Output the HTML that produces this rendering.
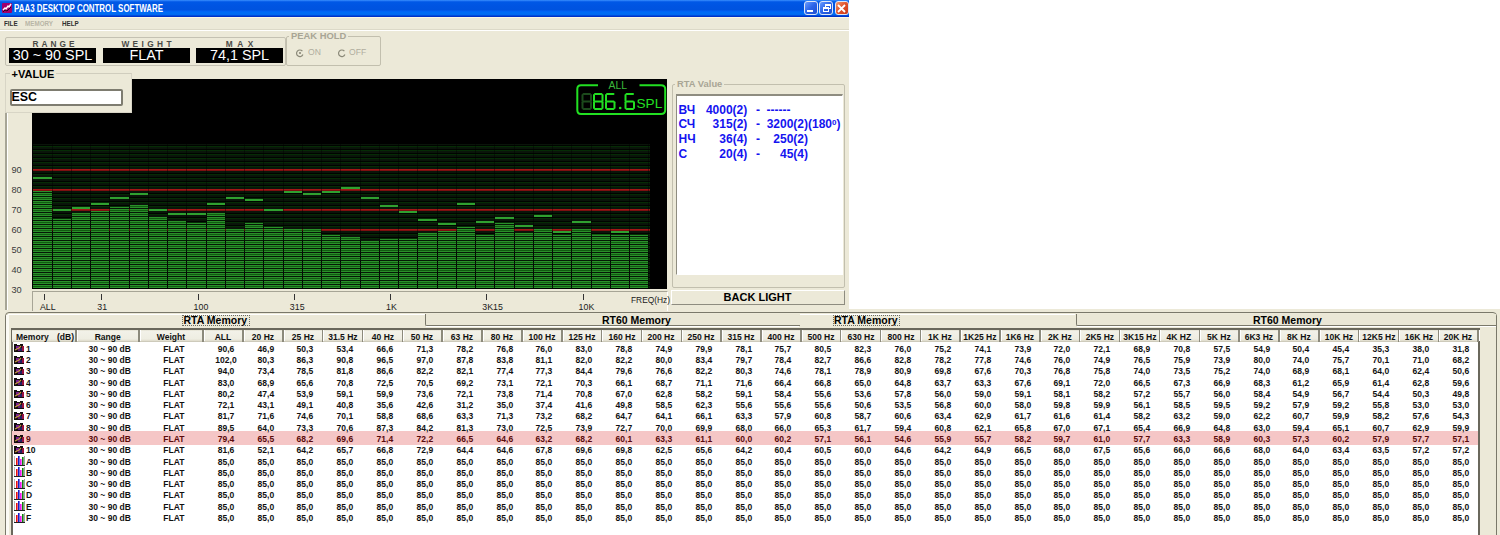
<!DOCTYPE html><html><head><meta charset="utf-8"><style>
*{margin:0;padding:0;box-sizing:border-box}
html,body{width:1500px;height:535px;overflow:hidden;background:#fff;font-family:"Liberation Sans",sans-serif}
.a{position:absolute}
.t{position:absolute;white-space:pre;line-height:1}
</style></head><body>
<div class="a" style="left:0;top:0;width:849px;height:313px;background:#ECE9D8"></div><div class="a" style="left:0;top:0;width:849px;height:17px;background:linear-gradient(to bottom,#3D95FF 0px,#1A6CF0 1px,#0058E6 2px,#0054E2 6px,#0053DF 10px,#0062F6 11px,#006EF4 13px,#0068F0 15px,#0032C8 16px,#0032C8 17px)"></div><div class="a" style="left:0;top:17px;width:849px;height:1px;background:#FBF8E4"></div><svg class="a" style="left:2px;top:3px" width="10" height="10" viewBox="0 0 10 10"><rect width="10" height="10" rx="1" fill="#A0006C"/><path d="M1 7 L3 5 L4 6 L6 3 L7 4 L9 1" stroke="#fff" stroke-width="1.4" fill="none"/><path d="M1 9 L3 7 L5 8 L9 4" stroke="#300020" stroke-width="1" fill="none"/></svg><div class="t" style="left:13.8px;top:4.2px;font-size:10.4px;font-weight:bold;color:#fff;transform-origin:0 0;transform:scaleX(0.762)">PAA3 DESKTOP CONTROL SOFTWARE</div><div class="a" style="left:803.5px;top:1px;width:14px;height:14px;border:1px solid #DDE6F8;border-radius:3px;background:linear-gradient(135deg,#6A9CFF,#2A63E8 50%,#1F4FD0)"></div><div class="a" style="left:807px;top:10px;width:6px;height:2px;background:#fff"></div><div class="a" style="left:819px;top:1px;width:14px;height:14px;border:1px solid #DDE6F8;border-radius:3px;background:linear-gradient(135deg,#6A9CFF,#2A63E8 50%,#1F4FD0)"></div><div class="a" style="left:823px;top:7px;width:6px;height:5px;border:1px solid #fff;border-top-width:2px"></div><div class="a" style="left:825px;top:4px;width:6px;height:5px;border:1px solid #fff;border-top-width:2px"></div><div class="a" style="left:834.5px;top:1px;width:14px;height:14px;border:1px solid #DDE6F8;border-radius:3px;background:linear-gradient(135deg,#F09A70,#E0502A 50%,#C83A18)"></div><svg class="a" style="left:837px;top:4px" width="9" height="9" viewBox="0 0 9 9"><path d="M1 1L8 8M8 1L1 8" stroke="#fff" stroke-width="1.8"/></svg><div class="t" style="left:4px;top:20px;font-size:7.4px;font-weight:bold;color:#303030;transform-origin:0 0;transform:scaleX(0.85)">FILE</div><div class="t" style="left:25px;top:20px;font-size:7.4px;font-weight:bold;color:#B8B5A6;transform-origin:0 0;transform:scaleX(0.85)">MEMORY</div><div class="t" style="left:62px;top:20px;font-size:7.4px;font-weight:bold;color:#303030;transform-origin:0 0;transform:scaleX(0.85)">HELP</div><div class="a" style="left:0;top:29px;width:849px;height:1px;background:#DCD9C8"></div><div class="a" style="left:0;top:30px;width:849px;height:1px;background:#FFFFFF"></div><div class="a" style="left:5px;top:37px;width:281px;height:29px;border:1px solid #C4C1B2;border-radius:2px"></div><div class="t" style="left:13.5px;width:80px;text-align:center;top:39.5px;font-size:8.3px;font-weight:bold;letter-spacing:3.0px;color:#4a4a46;text-indent:3.0px">RANGE</div><div class="a" style="left:9px;top:48px;width:87px;height:15px;background:#000"></div><div class="t" style="left:9px;width:87px;text-align:center;top:47.5px;font-size:14.4px;color:#fff">30 ~ 90 SPL</div><div class="t" style="left:106.5px;width:80px;text-align:center;top:39.5px;font-size:8.3px;font-weight:bold;letter-spacing:3.4px;color:#4a4a46;text-indent:3.4px">WEIGHT</div><div class="a" style="left:103px;top:48px;width:87px;height:15px;background:#000"></div><div class="t" style="left:103px;width:87px;text-align:center;top:47.5px;font-size:14.4px;color:#fff">FLAT</div><div class="t" style="left:199.6px;width:80px;text-align:center;top:39.5px;font-size:8.3px;font-weight:bold;letter-spacing:4.6px;color:#4a4a46;text-indent:4.6px">MAX</div><div class="a" style="left:196px;top:48px;width:87px;height:15px;background:#000"></div><div class="t" style="left:196px;width:87px;text-align:center;top:47.5px;font-size:14.4px;color:#fff">74,1 SPL</div><div class="a" style="left:285.5px;top:35.5px;width:95px;height:30px;border:1px solid #C2BFAE;border-radius:2px"></div><div class="t" style="left:289px;top:31px;padding:0 2px;background:#ECE9D8;font-size:9.4px;font-weight:bold;color:#A8A595">PEAK HOLD</div><svg class="a" style="left:295px;top:48px" width="10" height="10" viewBox="0 0 10 10"><path d="M7.4 3.2 A3.3 3.3 0 1 0 7.9 6.6" stroke="#8a8878" stroke-width="1.2" fill="none"/><circle cx="5" cy="5" r="1.1" fill="#8a8878"/></svg><div class="t" style="left:308px;top:48px;font-size:8.6px;color:#B0AD9E">ON</div><svg class="a" style="left:337px;top:48px" width="10" height="10" viewBox="0 0 10 10"><path d="M7.4 3.2 A3.3 3.3 0 1 0 7.9 6.6" stroke="#8a8878" stroke-width="1.2" fill="none"/></svg><div class="t" style="left:349px;top:48px;font-size:8.6px;color:#B0AD9E">OFF</div><div class="a" style="left:32px;top:79px;width:635px;height:210px;background:#000"></div><div class="a" style="left:5px;top:113px;width:2px;height:197px;background:#A7A596"></div><div class="a" style="left:7px;top:113px;width:1px;height:197px;background:#FFFFFF"></div><div class="t" style="left:11.5px;top:166px;font-size:9.2px;color:#3a3a3a">90</div><div class="t" style="left:11.5px;top:186px;font-size:9.2px;color:#3a3a3a">80</div><div class="t" style="left:11.5px;top:206px;font-size:9.2px;color:#3a3a3a">70</div><div class="t" style="left:11.5px;top:226px;font-size:9.2px;color:#3a3a3a">60</div><div class="t" style="left:11.5px;top:246px;font-size:9.2px;color:#3a3a3a">50</div><div class="t" style="left:11.5px;top:266px;font-size:9.2px;color:#3a3a3a">40</div><div class="t" style="left:11.5px;top:286px;font-size:9.2px;color:#3a3a3a">30</div><div class="a" style="left:33px;top:144px;width:617px;height:144px;background:linear-gradient(to bottom,#0a140a 0px,#0a140a 1px,#000400 1px,#000400 2px,#052C05 2px,#052C05 3px,#0a160a 3px,#0a160a 4px);background-size:100% 4px"></div><div class="a" style="left:33px;top:169px;width:617px;height:2px;background:linear-gradient(to bottom,#A41616 0,#A41616 1px,#7C1010 1px)"></div><div class="a" style="left:33px;top:189px;width:617px;height:2px;background:linear-gradient(to bottom,#A41616 0,#A41616 1px,#7C1010 1px)"></div><div class="a" style="left:33px;top:209px;width:617px;height:2px;background:linear-gradient(to bottom,#A41616 0,#A41616 1px,#7C1010 1px)"></div><div class="a" style="left:33px;top:229px;width:617px;height:2px;background:linear-gradient(to bottom,#A41616 0,#A41616 1px,#7C1010 1px)"></div><div class="a" style="left:33px;top:191px;width:19px;height:97px;background:linear-gradient(to bottom,#061806 0px,#061806 1px,#2A902A 1px,#2A902A 2px,#105C10 2px,#105C10 3px,#2A902A 3px,#2A902A 4px);background-size:100% 4px;background-position:0 -3px"></div><div class="a" style="left:52px;top:144px;width:1px;height:144px;background:rgba(0,0,0,0.4)"></div><div class="a" style="left:33px;top:177px;width:19px;height:2px;background:#30A030"></div><div class="a" style="left:53px;top:219px;width:18px;height:69px;background:linear-gradient(to bottom,#061806 0px,#061806 1px,#2A902A 1px,#2A902A 2px,#105C10 2px,#105C10 3px,#2A902A 3px,#2A902A 4px);background-size:100% 4px;background-position:0 -3px"></div><div class="a" style="left:71px;top:144px;width:1px;height:144px;background:rgba(0,0,0,0.4)"></div><div class="a" style="left:53px;top:209px;width:18px;height:2px;background:#30A030"></div><div class="a" style="left:72px;top:213px;width:18px;height:75px;background:linear-gradient(to bottom,#061806 0px,#061806 1px,#2A902A 1px,#2A902A 2px,#105C10 2px,#105C10 3px,#2A902A 3px,#2A902A 4px);background-size:100% 4px;background-position:0 -1px"></div><div class="a" style="left:90px;top:144px;width:1px;height:144px;background:rgba(0,0,0,0.4)"></div><div class="a" style="left:72px;top:207px;width:18px;height:2px;background:#30A030"></div><div class="a" style="left:91px;top:211px;width:18px;height:77px;background:linear-gradient(to bottom,#061806 0px,#061806 1px,#2A902A 1px,#2A902A 2px,#105C10 2px,#105C10 3px,#2A902A 3px,#2A902A 4px);background-size:100% 4px;background-position:0 -3px"></div><div class="a" style="left:109px;top:144px;width:1px;height:144px;background:rgba(0,0,0,0.4)"></div><div class="a" style="left:91px;top:203px;width:18px;height:2px;background:#30A030"></div><div class="a" style="left:110px;top:207px;width:19px;height:81px;background:linear-gradient(to bottom,#061806 0px,#061806 1px,#2A902A 1px,#2A902A 2px,#105C10 2px,#105C10 3px,#2A902A 3px,#2A902A 4px);background-size:100% 4px;background-position:0 -3px"></div><div class="a" style="left:129px;top:144px;width:1px;height:144px;background:rgba(0,0,0,0.4)"></div><div class="a" style="left:110px;top:197px;width:19px;height:2px;background:#30A030"></div><div class="a" style="left:130px;top:205px;width:18px;height:83px;background:linear-gradient(to bottom,#061806 0px,#061806 1px,#2A902A 1px,#2A902A 2px,#105C10 2px,#105C10 3px,#2A902A 3px,#2A902A 4px);background-size:100% 4px;background-position:0 -1px"></div><div class="a" style="left:148px;top:144px;width:1px;height:144px;background:rgba(0,0,0,0.4)"></div><div class="a" style="left:130px;top:193px;width:18px;height:2px;background:#30A030"></div><div class="a" style="left:149px;top:217px;width:18px;height:71px;background:linear-gradient(to bottom,#061806 0px,#061806 1px,#2A902A 1px,#2A902A 2px,#105C10 2px,#105C10 3px,#2A902A 3px,#2A902A 4px);background-size:100% 4px;background-position:0 -1px"></div><div class="a" style="left:167px;top:144px;width:1px;height:144px;background:rgba(0,0,0,0.4)"></div><div class="a" style="left:149px;top:209px;width:18px;height:2px;background:#30A030"></div><div class="a" style="left:168px;top:221px;width:18px;height:67px;background:linear-gradient(to bottom,#061806 0px,#061806 1px,#2A902A 1px,#2A902A 2px,#105C10 2px,#105C10 3px,#2A902A 3px,#2A902A 4px);background-size:100% 4px;background-position:0 -1px"></div><div class="a" style="left:186px;top:144px;width:1px;height:144px;background:rgba(0,0,0,0.4)"></div><div class="a" style="left:168px;top:213px;width:18px;height:2px;background:#30A030"></div><div class="a" style="left:187px;top:223px;width:19px;height:65px;background:linear-gradient(to bottom,#061806 0px,#061806 1px,#2A902A 1px,#2A902A 2px,#105C10 2px,#105C10 3px,#2A902A 3px,#2A902A 4px);background-size:100% 4px;background-position:0 -3px"></div><div class="a" style="left:206px;top:144px;width:1px;height:144px;background:rgba(0,0,0,0.4)"></div><div class="a" style="left:187px;top:213px;width:19px;height:2px;background:#30A030"></div><div class="a" style="left:207px;top:213px;width:18px;height:75px;background:linear-gradient(to bottom,#061806 0px,#061806 1px,#2A902A 1px,#2A902A 2px,#105C10 2px,#105C10 3px,#2A902A 3px,#2A902A 4px);background-size:100% 4px;background-position:0 -1px"></div><div class="a" style="left:225px;top:144px;width:1px;height:144px;background:rgba(0,0,0,0.4)"></div><div class="a" style="left:207px;top:203px;width:18px;height:2px;background:#30A030"></div><div class="a" style="left:226px;top:229px;width:18px;height:59px;background:linear-gradient(to bottom,#061806 0px,#061806 1px,#2A902A 1px,#2A902A 2px,#105C10 2px,#105C10 3px,#2A902A 3px,#2A902A 4px);background-size:100% 4px;background-position:0 -1px"></div><div class="a" style="left:244px;top:144px;width:1px;height:144px;background:rgba(0,0,0,0.4)"></div><div class="a" style="left:226px;top:197px;width:18px;height:2px;background:#30A030"></div><div class="a" style="left:245px;top:223px;width:18px;height:65px;background:linear-gradient(to bottom,#061806 0px,#061806 1px,#2A902A 1px,#2A902A 2px,#105C10 2px,#105C10 3px,#2A902A 3px,#2A902A 4px);background-size:100% 4px;background-position:0 -3px"></div><div class="a" style="left:263px;top:144px;width:1px;height:144px;background:rgba(0,0,0,0.4)"></div><div class="a" style="left:245px;top:199px;width:18px;height:2px;background:#30A030"></div><div class="a" style="left:264px;top:227px;width:19px;height:61px;background:linear-gradient(to bottom,#061806 0px,#061806 1px,#2A902A 1px,#2A902A 2px,#105C10 2px,#105C10 3px,#2A902A 3px,#2A902A 4px);background-size:100% 4px;background-position:0 -3px"></div><div class="a" style="left:283px;top:144px;width:1px;height:144px;background:rgba(0,0,0,0.4)"></div><div class="a" style="left:264px;top:209px;width:19px;height:2px;background:#30A030"></div><div class="a" style="left:284px;top:229px;width:18px;height:59px;background:linear-gradient(to bottom,#061806 0px,#061806 1px,#2A902A 1px,#2A902A 2px,#105C10 2px,#105C10 3px,#2A902A 3px,#2A902A 4px);background-size:100% 4px;background-position:0 -1px"></div><div class="a" style="left:302px;top:144px;width:1px;height:144px;background:rgba(0,0,0,0.4)"></div><div class="a" style="left:284px;top:191px;width:18px;height:2px;background:#30A030"></div><div class="a" style="left:303px;top:229px;width:18px;height:59px;background:linear-gradient(to bottom,#061806 0px,#061806 1px,#2A902A 1px,#2A902A 2px,#105C10 2px,#105C10 3px,#2A902A 3px,#2A902A 4px);background-size:100% 4px;background-position:0 -1px"></div><div class="a" style="left:321px;top:144px;width:1px;height:144px;background:rgba(0,0,0,0.4)"></div><div class="a" style="left:303px;top:193px;width:18px;height:2px;background:#30A030"></div><div class="a" style="left:322px;top:235px;width:18px;height:53px;background:linear-gradient(to bottom,#061806 0px,#061806 1px,#2A902A 1px,#2A902A 2px,#105C10 2px,#105C10 3px,#2A902A 3px,#2A902A 4px);background-size:100% 4px;background-position:0 -3px"></div><div class="a" style="left:340px;top:144px;width:1px;height:144px;background:rgba(0,0,0,0.4)"></div><div class="a" style="left:322px;top:191px;width:18px;height:2px;background:#30A030"></div><div class="a" style="left:341px;top:237px;width:19px;height:51px;background:linear-gradient(to bottom,#061806 0px,#061806 1px,#2A902A 1px,#2A902A 2px,#105C10 2px,#105C10 3px,#2A902A 3px,#2A902A 4px);background-size:100% 4px;background-position:0 -1px"></div><div class="a" style="left:360px;top:144px;width:1px;height:144px;background:rgba(0,0,0,0.4)"></div><div class="a" style="left:341px;top:187px;width:19px;height:2px;background:#30A030"></div><div class="a" style="left:361px;top:241px;width:18px;height:47px;background:linear-gradient(to bottom,#061806 0px,#061806 1px,#2A902A 1px,#2A902A 2px,#105C10 2px,#105C10 3px,#2A902A 3px,#2A902A 4px);background-size:100% 4px;background-position:0 -1px"></div><div class="a" style="left:379px;top:144px;width:1px;height:144px;background:rgba(0,0,0,0.4)"></div><div class="a" style="left:361px;top:197px;width:18px;height:2px;background:#30A030"></div><div class="a" style="left:380px;top:239px;width:18px;height:49px;background:linear-gradient(to bottom,#061806 0px,#061806 1px,#2A902A 1px,#2A902A 2px,#105C10 2px,#105C10 3px,#2A902A 3px,#2A902A 4px);background-size:100% 4px;background-position:0 -3px"></div><div class="a" style="left:398px;top:144px;width:1px;height:144px;background:rgba(0,0,0,0.4)"></div><div class="a" style="left:380px;top:205px;width:18px;height:2px;background:#30A030"></div><div class="a" style="left:399px;top:239px;width:18px;height:49px;background:linear-gradient(to bottom,#061806 0px,#061806 1px,#2A902A 1px,#2A902A 2px,#105C10 2px,#105C10 3px,#2A902A 3px,#2A902A 4px);background-size:100% 4px;background-position:0 -3px"></div><div class="a" style="left:417px;top:144px;width:1px;height:144px;background:rgba(0,0,0,0.4)"></div><div class="a" style="left:399px;top:211px;width:18px;height:2px;background:#30A030"></div><div class="a" style="left:418px;top:233px;width:19px;height:55px;background:linear-gradient(to bottom,#061806 0px,#061806 1px,#2A902A 1px,#2A902A 2px,#105C10 2px,#105C10 3px,#2A902A 3px,#2A902A 4px);background-size:100% 4px;background-position:0 -1px"></div><div class="a" style="left:437px;top:144px;width:1px;height:144px;background:rgba(0,0,0,0.4)"></div><div class="a" style="left:418px;top:219px;width:19px;height:2px;background:#30A030"></div><div class="a" style="left:438px;top:231px;width:18px;height:57px;background:linear-gradient(to bottom,#061806 0px,#061806 1px,#2A902A 1px,#2A902A 2px,#105C10 2px,#105C10 3px,#2A902A 3px,#2A902A 4px);background-size:100% 4px;background-position:0 -3px"></div><div class="a" style="left:456px;top:144px;width:1px;height:144px;background:rgba(0,0,0,0.4)"></div><div class="a" style="left:438px;top:223px;width:18px;height:2px;background:#30A030"></div><div class="a" style="left:457px;top:227px;width:18px;height:61px;background:linear-gradient(to bottom,#061806 0px,#061806 1px,#2A902A 1px,#2A902A 2px,#105C10 2px,#105C10 3px,#2A902A 3px,#2A902A 4px);background-size:100% 4px;background-position:0 -3px"></div><div class="a" style="left:475px;top:144px;width:1px;height:144px;background:rgba(0,0,0,0.4)"></div><div class="a" style="left:457px;top:203px;width:18px;height:2px;background:#30A030"></div><div class="a" style="left:476px;top:235px;width:18px;height:53px;background:linear-gradient(to bottom,#061806 0px,#061806 1px,#2A902A 1px,#2A902A 2px,#105C10 2px,#105C10 3px,#2A902A 3px,#2A902A 4px);background-size:100% 4px;background-position:0 -3px"></div><div class="a" style="left:494px;top:144px;width:1px;height:144px;background:rgba(0,0,0,0.4)"></div><div class="a" style="left:476px;top:221px;width:18px;height:2px;background:#30A030"></div><div class="a" style="left:495px;top:223px;width:19px;height:65px;background:linear-gradient(to bottom,#061806 0px,#061806 1px,#2A902A 1px,#2A902A 2px,#105C10 2px,#105C10 3px,#2A902A 3px,#2A902A 4px);background-size:100% 4px;background-position:0 -3px"></div><div class="a" style="left:514px;top:144px;width:1px;height:144px;background:rgba(0,0,0,0.4)"></div><div class="a" style="left:495px;top:217px;width:19px;height:2px;background:#30A030"></div><div class="a" style="left:515px;top:232px;width:18px;height:56px;background:linear-gradient(to bottom,#061806 0px,#061806 1px,#2A902A 1px,#2A902A 2px,#105C10 2px,#105C10 3px,#2A902A 3px,#2A902A 4px);background-size:100% 4px;background-position:0 0px"></div><div class="a" style="left:533px;top:144px;width:1px;height:144px;background:rgba(0,0,0,0.4)"></div><div class="a" style="left:515px;top:225px;width:18px;height:2px;background:#30A030"></div><div class="a" style="left:534px;top:229px;width:18px;height:59px;background:linear-gradient(to bottom,#061806 0px,#061806 1px,#2A902A 1px,#2A902A 2px,#105C10 2px,#105C10 3px,#2A902A 3px,#2A902A 4px);background-size:100% 4px;background-position:0 -1px"></div><div class="a" style="left:552px;top:144px;width:1px;height:144px;background:rgba(0,0,0,0.4)"></div><div class="a" style="left:534px;top:215px;width:18px;height:2px;background:#30A030"></div><div class="a" style="left:553px;top:235px;width:18px;height:53px;background:linear-gradient(to bottom,#061806 0px,#061806 1px,#2A902A 1px,#2A902A 2px,#105C10 2px,#105C10 3px,#2A902A 3px,#2A902A 4px);background-size:100% 4px;background-position:0 -3px"></div><div class="a" style="left:571px;top:144px;width:1px;height:144px;background:rgba(0,0,0,0.4)"></div><div class="a" style="left:553px;top:231px;width:18px;height:2px;background:#30A030"></div><div class="a" style="left:572px;top:229px;width:19px;height:59px;background:linear-gradient(to bottom,#061806 0px,#061806 1px,#2A902A 1px,#2A902A 2px,#105C10 2px,#105C10 3px,#2A902A 3px,#2A902A 4px);background-size:100% 4px;background-position:0 -1px"></div><div class="a" style="left:591px;top:144px;width:1px;height:144px;background:rgba(0,0,0,0.4)"></div><div class="a" style="left:572px;top:221px;width:19px;height:2px;background:#30A030"></div><div class="a" style="left:592px;top:234px;width:18px;height:54px;background:linear-gradient(to bottom,#061806 0px,#061806 1px,#2A902A 1px,#2A902A 2px,#105C10 2px,#105C10 3px,#2A902A 3px,#2A902A 4px);background-size:100% 4px;background-position:0 -2px"></div><div class="a" style="left:610px;top:144px;width:1px;height:144px;background:rgba(0,0,0,0.4)"></div><div class="a" style="left:611px;top:235px;width:18px;height:53px;background:linear-gradient(to bottom,#061806 0px,#061806 1px,#2A902A 1px,#2A902A 2px,#105C10 2px,#105C10 3px,#2A902A 3px,#2A902A 4px);background-size:100% 4px;background-position:0 -3px"></div><div class="a" style="left:629px;top:144px;width:1px;height:144px;background:rgba(0,0,0,0.4)"></div><div class="a" style="left:611px;top:231px;width:18px;height:2px;background:#30A030"></div><div class="a" style="left:630px;top:235px;width:18px;height:53px;background:linear-gradient(to bottom,#061806 0px,#061806 1px,#2A902A 1px,#2A902A 2px,#105C10 2px,#105C10 3px,#2A902A 3px,#2A902A 4px);background-size:100% 4px;background-position:0 -3px"></div><div class="a" style="left:648px;top:144px;width:1px;height:144px;background:rgba(0,0,0,0.4)"></div><div class="a" style="left:32px;top:288px;width:618px;height:1px;background:#000"></div><svg class="a" style="left:575px;top:80px" width="94" height="37" viewBox="575 80 94 37"><path d="M598 85.2 H581 Q577.3 85.2 577.3 89 V110 Q577.3 114 581 114 H661 Q665.2 114 665.2 110 V89 Q665.2 85.2 661 85.2 H639.5" stroke="#22E022" stroke-width="2" fill="none"/></svg><div class="t" style="left:608.5px;top:81.2px;font-size:10.4px;color:#3CB83C">ALL</div><svg class="a" style="left:0;top:0" width="700" height="130"><path d="M583.5 94.0 H590.0" stroke="#1C4A1C" stroke-width="2.0" stroke-linecap="round" fill="none"/><path d="M591.0 95.0 V100.7" stroke="#1C4A1C" stroke-width="2.0" stroke-linecap="round" fill="none"/><path d="M591.0 102.3 V108.0" stroke="#1C4A1C" stroke-width="2.0" stroke-linecap="round" fill="none"/><path d="M583.5 109.0 H590.0" stroke="#1C4A1C" stroke-width="2.0" stroke-linecap="round" fill="none"/><path d="M582.5 102.3 V108.0" stroke="#1C4A1C" stroke-width="2.0" stroke-linecap="round" fill="none"/><path d="M582.5 95.0 V100.7" stroke="#1C4A1C" stroke-width="2.0" stroke-linecap="round" fill="none"/><path d="M583.5 101.5 H590.0" stroke="#1C4A1C" stroke-width="2.0" stroke-linecap="round" fill="none"/><path d="M595.0 94.0 H601.5" stroke="#22E022" stroke-width="2.0" stroke-linecap="round" fill="none"/><path d="M602.5 95.0 V100.7" stroke="#22E022" stroke-width="2.0" stroke-linecap="round" fill="none"/><path d="M602.5 102.3 V108.0" stroke="#22E022" stroke-width="2.0" stroke-linecap="round" fill="none"/><path d="M595.0 109.0 H601.5" stroke="#22E022" stroke-width="2.0" stroke-linecap="round" fill="none"/><path d="M594.0 102.3 V108.0" stroke="#22E022" stroke-width="2.0" stroke-linecap="round" fill="none"/><path d="M594.0 95.0 V100.7" stroke="#22E022" stroke-width="2.0" stroke-linecap="round" fill="none"/><path d="M595.0 101.5 H601.5" stroke="#22E022" stroke-width="2.0" stroke-linecap="round" fill="none"/><path d="M607.0 94.0 H613.5" stroke="#22E022" stroke-width="2.0" stroke-linecap="round" fill="none"/><path d="M614.5 102.3 V108.0" stroke="#22E022" stroke-width="2.0" stroke-linecap="round" fill="none"/><path d="M607.0 109.0 H613.5" stroke="#22E022" stroke-width="2.0" stroke-linecap="round" fill="none"/><path d="M606.0 102.3 V108.0" stroke="#22E022" stroke-width="2.0" stroke-linecap="round" fill="none"/><path d="M606.0 95.0 V100.7" stroke="#22E022" stroke-width="2.0" stroke-linecap="round" fill="none"/><path d="M607.0 101.5 H613.5" stroke="#22E022" stroke-width="2.0" stroke-linecap="round" fill="none"/><circle cx="620.2" cy="108" r="1.3" fill="#22E022"/><path d="M626.5 94.0 H633.0" stroke="#22E022" stroke-width="2.0" stroke-linecap="round" fill="none"/><path d="M634.0 102.3 V108.0" stroke="#22E022" stroke-width="2.0" stroke-linecap="round" fill="none"/><path d="M626.5 109.0 H633.0" stroke="#22E022" stroke-width="2.0" stroke-linecap="round" fill="none"/><path d="M625.5 102.3 V108.0" stroke="#22E022" stroke-width="2.0" stroke-linecap="round" fill="none"/><path d="M625.5 95.0 V100.7" stroke="#22E022" stroke-width="2.0" stroke-linecap="round" fill="none"/><path d="M626.5 101.5 H633.0" stroke="#22E022" stroke-width="2.0" stroke-linecap="round" fill="none"/></svg><div class="t" style="left:636.5px;top:96.5px;font-size:13.6px;color:#22E022">SPL</div><div class="a" style="left:5px;top:73px;width:127px;height:40px;background:#ECE9D8;border:1px solid #D8D5C6;border-top-color:#D0CDBE"></div><div class="t" style="left:9.5px;top:68.5px;padding:0 2px;background:#ECE9D8;font-size:11px;font-weight:bold;color:#000">+VALUE</div><div class="a" style="left:10px;top:88.5px;width:113px;height:17.5px;background:#fff;border:2px solid #7E7C70;border-radius:2px"></div><div class="t" style="left:11.5px;top:91px;font-size:12.4px;font-weight:bold;color:#000">ESC</div><div class="a" style="left:32px;top:291px;width:636px;height:20px;border-left:1px solid #A7A596;border-top:1px solid #A7A596;border-right:1px solid #fff"></div><div class="a" style="left:44px;top:294px;width:1px;height:6px;background:#333"></div><div class="t" style="left:40px;top:303px;font-size:8.8px;color:#1a1a1a">ALL</div><div class="a" style="left:101px;top:294px;width:1px;height:6px;background:#333"></div><div class="t" style="left:97.35px;top:303px;font-size:8.8px;color:#1a1a1a">31</div><div class="a" style="left:198px;top:294px;width:1px;height:6px;background:#333"></div><div class="t" style="left:193.60000000000002px;top:303px;font-size:8.8px;color:#1a1a1a">100</div><div class="a" style="left:294px;top:294px;width:1px;height:6px;background:#333"></div><div class="t" style="left:289.85px;top:303px;font-size:8.8px;color:#1a1a1a">315</div><div class="a" style="left:390px;top:294px;width:1px;height:6px;background:#333"></div><div class="t" style="left:386.1px;top:303px;font-size:8.8px;color:#1a1a1a">1K</div><div class="a" style="left:486px;top:294px;width:1px;height:6px;background:#333"></div><div class="t" style="left:482.35px;top:303px;font-size:8.8px;color:#1a1a1a">3K15</div><div class="a" style="left:583px;top:294px;width:1px;height:6px;background:#333"></div><div class="t" style="left:578.5999999999999px;top:303px;font-size:8.8px;color:#1a1a1a">10K</div><div class="t" style="left:630.5px;top:295.5px;font-size:8.8px;color:#1a1a1a;transform-origin:0 0;transform:scaleX(0.95)">FREQ(Hz)</div><div class="a" style="left:671.5px;top:83.5px;width:173px;height:204px;border:1px solid #C2BFAE;border-radius:2px"></div><div class="t" style="left:675px;top:78.7px;padding:0 2px;background:#ECE9D8;font-size:9.4px;font-weight:bold;color:#A8A595">RTA Value</div><div class="a" style="left:676px;top:94px;width:167px;height:181px;background:#fff;border-top:2px solid #8E8C80;border-left:1px solid #8E8C80;border-right:1px solid #fff;border-bottom:1px solid #fff"></div><div class="t" style="left:678.5px;top:103.5px;font-size:12px;font-weight:bold;color:#1414F0">ВЧ</div><div class="t" style="left:647.3px;width:100px;text-align:right;top:103.5px;font-size:12px;font-weight:bold;color:#1414F0">4000(2)</div><div class="t" style="left:756px;top:103.5px;font-size:12px;font-weight:bold;color:#1414F0">-</div><div class="t" style="left:766.5px;top:103.5px;font-size:12px;font-weight:bold;color:#1414F0">------</div><div class="t" style="left:678.5px;top:118.3px;font-size:12px;font-weight:bold;color:#1414F0">СЧ</div><div class="t" style="left:647.3px;width:100px;text-align:right;top:118.3px;font-size:12px;font-weight:bold;color:#1414F0">315(2)</div><div class="t" style="left:756px;top:118.3px;font-size:12px;font-weight:bold;color:#1414F0">-</div><div class="t" style="left:708px;width:100px;text-align:right;top:118.3px;font-size:12px;font-weight:bold;color:#1414F0">3200(2)</div><div class="t" style="left:808px;top:118.3px;font-size:12px;font-weight:bold;color:#1414F0">(180<span style="font-size:8px;vertical-align:3px">0</span>)</div><div class="t" style="left:678.5px;top:133.2px;font-size:12px;font-weight:bold;color:#1414F0">НЧ</div><div class="t" style="left:647.3px;width:100px;text-align:right;top:133.2px;font-size:12px;font-weight:bold;color:#1414F0">36(4)</div><div class="t" style="left:756px;top:133.2px;font-size:12px;font-weight:bold;color:#1414F0">-</div><div class="t" style="left:708px;width:100px;text-align:right;top:133.2px;font-size:12px;font-weight:bold;color:#1414F0">250(2)</div><div class="t" style="left:678.5px;top:148px;font-size:12px;font-weight:bold;color:#1414F0">С</div><div class="t" style="left:647.3px;width:100px;text-align:right;top:148px;font-size:12px;font-weight:bold;color:#1414F0">20(4)</div><div class="t" style="left:756px;top:148px;font-size:12px;font-weight:bold;color:#1414F0">-</div><div class="t" style="left:708px;width:100px;text-align:right;top:148px;font-size:12px;font-weight:bold;color:#1414F0">45(4)</div><div class="a" style="left:671px;top:289.8px;width:174px;height:15.5px;background:#ECE9D8;border:1px solid #fff;border-right:1.5px solid #8E8C80;border-bottom:1.5px solid #8E8C80"></div><div class="t" style="left:671px;width:173px;text-align:center;top:291.8px;font-size:11px;font-weight:bold;color:#000">BACK LIGHT</div><div class="a" style="left:849px;top:309px;width:651px;height:226px;background:#ECE9D8"></div><div class="a" style="left:0;top:311px;width:849px;height:224px;background:#ECE9D8"></div><div class="a" style="left:5px;top:312.3px;width:1492px;height:260px;border:1px solid #7A786A;border-radius:4px"></div><div class="a" style="left:6.2px;top:315px;width:2.6px;height:230px;background:#FBFAF4"></div><div class="a" style="left:8px;top:313.5px;width:417px;height:1px;background:#fff"></div><div class="a" style="left:800px;top:313.5px;width:275px;height:1px;background:#fff"></div><div class="a" style="left:424.5px;top:313.5px;width:375px;height:12.5px;border-left:1px solid #7A786A;border-bottom:1px solid #7A786A;border-bottom-left-radius:2px;background:#EAE7D6"></div><div class="a" style="left:426px;top:326px;width:373px;height:1px;background:#fff"></div><div class="a" style="left:1075.5px;top:313.5px;width:420px;height:12.5px;border-left:1px solid #7A786A;border-bottom:1px solid #7A786A;border-bottom-left-radius:2px;background:#EAE7D6"></div><div class="a" style="left:1077px;top:326px;width:419px;height:1px;background:#fff"></div><div class="t" style="left:183.5px;top:314.5px;font-size:10.5px;font-weight:bold;color:#000">RTA Memory</div><div class="a" style="left:182px;top:314.5px;width:67.5px;height:11.5px;border:1px dotted #6a6a60"></div><div class="t" style="left:602px;top:314.5px;font-size:10.5px;font-weight:bold;color:#000">RT60 Memory</div><div class="t" style="left:834px;top:314.5px;font-size:10.5px;font-weight:bold;color:#000">RTA Memory</div><div class="a" style="left:832.5px;top:314.5px;width:67.5px;height:11.5px;border:1px dotted #6a6a60"></div><div class="t" style="left:1253px;top:314.5px;font-size:10.5px;font-weight:bold;color:#000">RT60 Memory</div><div class="a" style="left:10.5px;top:328px;width:1469.0px;height:220px;background:#fff;border:2px solid #6A685C;border-bottom:none"></div><div class="a" style="left:12px;top:329.5px;width:1466.0px;height:12.5px;background:linear-gradient(to bottom,#E4E1D2 0px,#F2F1E8 1.5px,#EEEDE2 9px,#E2DFD0 10.5px,#B9B6A6 12.5px)"></div><div class="a" style="left:75.05px;top:329.5px;width:1.5px;height:12.5px;background:#8C8A7C"></div><div class="a" style="left:76.55px;top:330.0px;width:1px;height:11.0px;background:#fff"></div><div class="t" style="left:16px;top:332.1px;font-size:9.8px;font-weight:bold;color:#111;transform:scaleX(0.87);transform-origin:0 0">Memory</div><div class="t" style="left:56.5px;top:332.1px;font-size:9.8px;font-weight:bold;color:#111;transform:scaleX(0.87);transform-origin:0 0">(dB)</div><div class="a" style="left:138.45px;top:329.5px;width:1.5px;height:12.5px;background:#8C8A7C"></div><div class="a" style="left:139.95px;top:330.0px;width:1px;height:11.0px;background:#fff"></div><div class="t" style="left:75.8px;width:63.39999999999999px;text-align:center;top:332.1px;font-size:9.8px;font-weight:bold;color:#111;transform:scaleX(0.87)">Range</div><div class="a" style="left:202.25px;top:329.5px;width:1.5px;height:12.5px;background:#8C8A7C"></div><div class="a" style="left:203.75px;top:330.0px;width:1px;height:11.0px;background:#fff"></div><div class="t" style="left:139.2px;width:63.80000000000001px;text-align:center;top:332.1px;font-size:9.8px;font-weight:bold;color:#111;transform:scaleX(0.87)">Weight</div><div class="a" style="left:242.25px;top:329.5px;width:1.5px;height:12.5px;background:#8C8A7C"></div><div class="a" style="left:243.75px;top:330.0px;width:1px;height:11.0px;background:#fff"></div><div class="t" style="left:203px;width:40.0px;text-align:center;top:332.1px;font-size:9.8px;font-weight:bold;color:#111;transform:scaleX(0.87)">ALL</div><div class="a" style="left:282.095px;top:329.5px;width:1.5px;height:12.5px;background:#8C8A7C"></div><div class="a" style="left:283.595px;top:330.0px;width:1px;height:11.0px;background:#fff"></div><div class="t" style="left:243.0px;width:39.84500000000003px;text-align:center;top:332.1px;font-size:9.8px;font-weight:bold;color:#111;transform:scaleX(0.87)">20 Hz</div><div class="a" style="left:321.94px;top:329.5px;width:1.5px;height:12.5px;background:#8C8A7C"></div><div class="a" style="left:323.44px;top:330.0px;width:1px;height:11.0px;background:#fff"></div><div class="t" style="left:282.845px;width:39.84499999999997px;text-align:center;top:332.1px;font-size:9.8px;font-weight:bold;color:#111;transform:scaleX(0.87)">25 Hz</div><div class="a" style="left:361.78499999999997px;top:329.5px;width:1.5px;height:12.5px;background:#8C8A7C"></div><div class="a" style="left:363.28499999999997px;top:330.0px;width:1px;height:11.0px;background:#fff"></div><div class="t" style="left:322.69px;width:39.84499999999997px;text-align:center;top:332.1px;font-size:9.8px;font-weight:bold;color:#111;transform:scaleX(0.87)">31.5 Hz</div><div class="a" style="left:401.63px;top:329.5px;width:1.5px;height:12.5px;background:#8C8A7C"></div><div class="a" style="left:403.13px;top:330.0px;width:1px;height:11.0px;background:#fff"></div><div class="t" style="left:362.53499999999997px;width:39.84500000000003px;text-align:center;top:332.1px;font-size:9.8px;font-weight:bold;color:#111;transform:scaleX(0.87)">40 Hz</div><div class="a" style="left:441.475px;top:329.5px;width:1.5px;height:12.5px;background:#8C8A7C"></div><div class="a" style="left:442.975px;top:330.0px;width:1px;height:11.0px;background:#fff"></div><div class="t" style="left:402.38px;width:39.84500000000003px;text-align:center;top:332.1px;font-size:9.8px;font-weight:bold;color:#111;transform:scaleX(0.87)">50 Hz</div><div class="a" style="left:481.32px;top:329.5px;width:1.5px;height:12.5px;background:#8C8A7C"></div><div class="a" style="left:482.82px;top:330.0px;width:1px;height:11.0px;background:#fff"></div><div class="t" style="left:442.225px;width:39.84499999999997px;text-align:center;top:332.1px;font-size:9.8px;font-weight:bold;color:#111;transform:scaleX(0.87)">63 Hz</div><div class="a" style="left:521.165px;top:329.5px;width:1.5px;height:12.5px;background:#8C8A7C"></div><div class="a" style="left:522.665px;top:330.0px;width:1px;height:11.0px;background:#fff"></div><div class="t" style="left:482.07px;width:39.84499999999997px;text-align:center;top:332.1px;font-size:9.8px;font-weight:bold;color:#111;transform:scaleX(0.87)">80 Hz</div><div class="a" style="left:561.01px;top:329.5px;width:1.5px;height:12.5px;background:#8C8A7C"></div><div class="a" style="left:562.51px;top:330.0px;width:1px;height:11.0px;background:#fff"></div><div class="t" style="left:521.915px;width:39.84500000000003px;text-align:center;top:332.1px;font-size:9.8px;font-weight:bold;color:#111;transform:scaleX(0.87)">100 Hz</div><div class="a" style="left:600.855px;top:329.5px;width:1.5px;height:12.5px;background:#8C8A7C"></div><div class="a" style="left:602.355px;top:330.0px;width:1px;height:11.0px;background:#fff"></div><div class="t" style="left:561.76px;width:39.84500000000003px;text-align:center;top:332.1px;font-size:9.8px;font-weight:bold;color:#111;transform:scaleX(0.87)">125 Hz</div><div class="a" style="left:640.7px;top:329.5px;width:1.5px;height:12.5px;background:#8C8A7C"></div><div class="a" style="left:642.2px;top:330.0px;width:1px;height:11.0px;background:#fff"></div><div class="t" style="left:601.605px;width:39.84500000000003px;text-align:center;top:332.1px;font-size:9.8px;font-weight:bold;color:#111;transform:scaleX(0.87)">160 Hz</div><div class="a" style="left:680.545px;top:329.5px;width:1.5px;height:12.5px;background:#8C8A7C"></div><div class="a" style="left:682.045px;top:330.0px;width:1px;height:11.0px;background:#fff"></div><div class="t" style="left:641.45px;width:39.844999999999914px;text-align:center;top:332.1px;font-size:9.8px;font-weight:bold;color:#111;transform:scaleX(0.87)">200 Hz</div><div class="a" style="left:720.39px;top:329.5px;width:1.5px;height:12.5px;background:#8C8A7C"></div><div class="a" style="left:721.89px;top:330.0px;width:1px;height:11.0px;background:#fff"></div><div class="t" style="left:681.295px;width:39.84500000000003px;text-align:center;top:332.1px;font-size:9.8px;font-weight:bold;color:#111;transform:scaleX(0.87)">250 Hz</div><div class="a" style="left:760.235px;top:329.5px;width:1.5px;height:12.5px;background:#8C8A7C"></div><div class="a" style="left:761.735px;top:330.0px;width:1px;height:11.0px;background:#fff"></div><div class="t" style="left:721.14px;width:39.84500000000003px;text-align:center;top:332.1px;font-size:9.8px;font-weight:bold;color:#111;transform:scaleX(0.87)">315 Hz</div><div class="a" style="left:800.0799999999999px;top:329.5px;width:1.5px;height:12.5px;background:#8C8A7C"></div><div class="a" style="left:801.5799999999999px;top:330.0px;width:1px;height:11.0px;background:#fff"></div><div class="t" style="left:760.985px;width:39.844999999999914px;text-align:center;top:332.1px;font-size:9.8px;font-weight:bold;color:#111;transform:scaleX(0.87)">400 Hz</div><div class="a" style="left:839.925px;top:329.5px;width:1.5px;height:12.5px;background:#8C8A7C"></div><div class="a" style="left:841.425px;top:330.0px;width:1px;height:11.0px;background:#fff"></div><div class="t" style="left:800.8299999999999px;width:39.84500000000003px;text-align:center;top:332.1px;font-size:9.8px;font-weight:bold;color:#111;transform:scaleX(0.87)">500 Hz</div><div class="a" style="left:879.77px;top:329.5px;width:1.5px;height:12.5px;background:#8C8A7C"></div><div class="a" style="left:881.27px;top:330.0px;width:1px;height:11.0px;background:#fff"></div><div class="t" style="left:840.675px;width:39.84500000000003px;text-align:center;top:332.1px;font-size:9.8px;font-weight:bold;color:#111;transform:scaleX(0.87)">630 Hz</div><div class="a" style="left:919.615px;top:329.5px;width:1.5px;height:12.5px;background:#8C8A7C"></div><div class="a" style="left:921.115px;top:330.0px;width:1px;height:11.0px;background:#fff"></div><div class="t" style="left:880.52px;width:39.84500000000003px;text-align:center;top:332.1px;font-size:9.8px;font-weight:bold;color:#111;transform:scaleX(0.87)">800 Hz</div><div class="a" style="left:959.46px;top:329.5px;width:1.5px;height:12.5px;background:#8C8A7C"></div><div class="a" style="left:960.96px;top:330.0px;width:1px;height:11.0px;background:#fff"></div><div class="t" style="left:920.365px;width:39.84500000000003px;text-align:center;top:332.1px;font-size:9.8px;font-weight:bold;color:#111;transform:scaleX(0.87)">1K Hz</div><div class="a" style="left:999.305px;top:329.5px;width:1.5px;height:12.5px;background:#8C8A7C"></div><div class="a" style="left:1000.805px;top:330.0px;width:1px;height:11.0px;background:#fff"></div><div class="t" style="left:960.21px;width:39.844999999999914px;text-align:center;top:332.1px;font-size:9.8px;font-weight:bold;color:#111;transform:scaleX(0.87)">1K25 Hz</div><div class="a" style="left:1039.15px;top:329.5px;width:1.5px;height:12.5px;background:#8C8A7C"></div><div class="a" style="left:1040.65px;top:330.0px;width:1px;height:11.0px;background:#fff"></div><div class="t" style="left:1000.055px;width:39.84500000000014px;text-align:center;top:332.1px;font-size:9.8px;font-weight:bold;color:#111;transform:scaleX(0.87)">1K6 Hz</div><div class="a" style="left:1078.995px;top:329.5px;width:1.5px;height:12.5px;background:#8C8A7C"></div><div class="a" style="left:1080.495px;top:330.0px;width:1px;height:11.0px;background:#fff"></div><div class="t" style="left:1039.9px;width:39.8449999999998px;text-align:center;top:332.1px;font-size:9.8px;font-weight:bold;color:#111;transform:scaleX(0.87)">2K Hz</div><div class="a" style="left:1118.84px;top:329.5px;width:1.5px;height:12.5px;background:#8C8A7C"></div><div class="a" style="left:1120.34px;top:330.0px;width:1px;height:11.0px;background:#fff"></div><div class="t" style="left:1079.745px;width:39.84500000000003px;text-align:center;top:332.1px;font-size:9.8px;font-weight:bold;color:#111;transform:scaleX(0.87)">2K5 Hz</div><div class="a" style="left:1158.685px;top:329.5px;width:1.5px;height:12.5px;background:#8C8A7C"></div><div class="a" style="left:1160.185px;top:330.0px;width:1px;height:11.0px;background:#fff"></div><div class="t" style="left:1119.59px;width:39.84500000000003px;text-align:center;top:332.1px;font-size:9.8px;font-weight:bold;color:#111;transform:scaleX(0.87)">3K15 Hz</div><div class="a" style="left:1198.53px;top:329.5px;width:1.5px;height:12.5px;background:#8C8A7C"></div><div class="a" style="left:1200.03px;top:330.0px;width:1px;height:11.0px;background:#fff"></div><div class="t" style="left:1159.435px;width:39.84500000000003px;text-align:center;top:332.1px;font-size:9.8px;font-weight:bold;color:#111;transform:scaleX(0.87)">4K HZ</div><div class="a" style="left:1238.375px;top:329.5px;width:1.5px;height:12.5px;background:#8C8A7C"></div><div class="a" style="left:1239.875px;top:330.0px;width:1px;height:11.0px;background:#fff"></div><div class="t" style="left:1199.28px;width:39.84500000000003px;text-align:center;top:332.1px;font-size:9.8px;font-weight:bold;color:#111;transform:scaleX(0.87)">5K Hz</div><div class="a" style="left:1278.22px;top:329.5px;width:1.5px;height:12.5px;background:#8C8A7C"></div><div class="a" style="left:1279.72px;top:330.0px;width:1px;height:11.0px;background:#fff"></div><div class="t" style="left:1239.125px;width:39.84500000000003px;text-align:center;top:332.1px;font-size:9.8px;font-weight:bold;color:#111;transform:scaleX(0.87)">6K3 Hz</div><div class="a" style="left:1318.065px;top:329.5px;width:1.5px;height:12.5px;background:#8C8A7C"></div><div class="a" style="left:1319.565px;top:330.0px;width:1px;height:11.0px;background:#fff"></div><div class="t" style="left:1278.97px;width:39.84500000000003px;text-align:center;top:332.1px;font-size:9.8px;font-weight:bold;color:#111;transform:scaleX(0.87)">8K Hz</div><div class="a" style="left:1357.9099999999999px;top:329.5px;width:1.5px;height:12.5px;background:#8C8A7C"></div><div class="a" style="left:1359.4099999999999px;top:330.0px;width:1px;height:11.0px;background:#fff"></div><div class="t" style="left:1318.815px;width:39.8449999999998px;text-align:center;top:332.1px;font-size:9.8px;font-weight:bold;color:#111;transform:scaleX(0.87)">10K Hz</div><div class="a" style="left:1397.7549999999999px;top:329.5px;width:1.5px;height:12.5px;background:#8C8A7C"></div><div class="a" style="left:1399.2549999999999px;top:330.0px;width:1px;height:11.0px;background:#fff"></div><div class="t" style="left:1358.6599999999999px;width:39.84500000000003px;text-align:center;top:332.1px;font-size:9.8px;font-weight:bold;color:#111;transform:scaleX(0.87)">12K5 Hz</div><div class="a" style="left:1437.6px;top:329.5px;width:1.5px;height:12.5px;background:#8C8A7C"></div><div class="a" style="left:1439.1px;top:330.0px;width:1px;height:11.0px;background:#fff"></div><div class="t" style="left:1398.5049999999999px;width:39.84500000000003px;text-align:center;top:332.1px;font-size:9.8px;font-weight:bold;color:#111;transform:scaleX(0.87)">16K Hz</div><div class="a" style="left:1477.445px;top:329.5px;width:1.5px;height:12.5px;background:#8C8A7C"></div><div class="a" style="left:1478.945px;top:330.0px;width:1px;height:11.0px;background:#fff"></div><div class="t" style="left:1438.35px;width:39.84500000000003px;text-align:center;top:332.1px;font-size:9.8px;font-weight:bold;color:#111;transform:scaleX(0.87)">20K Hz</div><div class="a" style="left:12px;top:431.2px;width:1466.0px;height:13.4px;background:#F5C6C6"></div><svg class="a" style="left:14px;top:343px" width="11" height="10" viewBox="0 0 11 10" shape-rendering="crispEdges"><path d="M0 1 H3 V2 H6 V1 H9 V3 H10 V9 H0Z" fill="#140c10"/><rect x="2" y="3" width="3" height="3" fill="#7A2090"/><rect x="4" y="5" width="2" height="3" fill="#60187A"/><path d="M1 7 L3 6 L5 5 L7 3" stroke="#C89A40" stroke-width="1.2" fill="none" shape-rendering="auto"/><rect x="8" y="3" width="2" height="5" fill="#9A1040"/><rect x="6" y="5" width="2" height="3" fill="#202060"/></svg><div class="t" style="left:25.5px;top:343.79999999999995px;font-size:9.8px;font-weight:bold;transform:scaleX(0.87);transform-origin:0 0;color:#111">1</div><div class="t" style="left:78.3px;width:63.39999999999999px;text-align:center;top:343.79999999999995px;font-size:9.8px;font-weight:bold;transform:scaleX(0.87);color:#111">30 ~ 90 dB</div><div class="t" style="left:141.7px;width:63.80000000000001px;text-align:center;top:343.79999999999995px;font-size:9.8px;font-weight:bold;transform:scaleX(0.87);color:#111">FLAT</div><div class="t" style="left:205.5px;width:40.0px;text-align:center;top:343.79999999999995px;font-size:9.8px;font-weight:bold;transform:scaleX(0.87);color:#111">90,6</div><div class="t" style="left:245.5px;width:39.84500000000003px;text-align:center;top:343.79999999999995px;font-size:9.8px;font-weight:bold;transform:scaleX(0.87);color:#111">46,9</div><div class="t" style="left:285.345px;width:39.84499999999997px;text-align:center;top:343.79999999999995px;font-size:9.8px;font-weight:bold;transform:scaleX(0.87);color:#111">50,3</div><div class="t" style="left:325.19px;width:39.84499999999997px;text-align:center;top:343.79999999999995px;font-size:9.8px;font-weight:bold;transform:scaleX(0.87);color:#111">53,4</div><div class="t" style="left:365.03499999999997px;width:39.84500000000003px;text-align:center;top:343.79999999999995px;font-size:9.8px;font-weight:bold;transform:scaleX(0.87);color:#111">66,6</div><div class="t" style="left:404.88px;width:39.84500000000003px;text-align:center;top:343.79999999999995px;font-size:9.8px;font-weight:bold;transform:scaleX(0.87);color:#111">71,3</div><div class="t" style="left:444.725px;width:39.84499999999997px;text-align:center;top:343.79999999999995px;font-size:9.8px;font-weight:bold;transform:scaleX(0.87);color:#111">78,2</div><div class="t" style="left:484.57px;width:39.84499999999997px;text-align:center;top:343.79999999999995px;font-size:9.8px;font-weight:bold;transform:scaleX(0.87);color:#111">76,8</div><div class="t" style="left:524.415px;width:39.84500000000003px;text-align:center;top:343.79999999999995px;font-size:9.8px;font-weight:bold;transform:scaleX(0.87);color:#111">76,0</div><div class="t" style="left:564.26px;width:39.84500000000003px;text-align:center;top:343.79999999999995px;font-size:9.8px;font-weight:bold;transform:scaleX(0.87);color:#111">83,0</div><div class="t" style="left:604.105px;width:39.84500000000003px;text-align:center;top:343.79999999999995px;font-size:9.8px;font-weight:bold;transform:scaleX(0.87);color:#111">78,8</div><div class="t" style="left:643.95px;width:39.844999999999914px;text-align:center;top:343.79999999999995px;font-size:9.8px;font-weight:bold;transform:scaleX(0.87);color:#111">74,9</div><div class="t" style="left:683.795px;width:39.84500000000003px;text-align:center;top:343.79999999999995px;font-size:9.8px;font-weight:bold;transform:scaleX(0.87);color:#111">79,9</div><div class="t" style="left:723.64px;width:39.84500000000003px;text-align:center;top:343.79999999999995px;font-size:9.8px;font-weight:bold;transform:scaleX(0.87);color:#111">78,1</div><div class="t" style="left:763.485px;width:39.844999999999914px;text-align:center;top:343.79999999999995px;font-size:9.8px;font-weight:bold;transform:scaleX(0.87);color:#111">75,7</div><div class="t" style="left:803.3299999999999px;width:39.84500000000003px;text-align:center;top:343.79999999999995px;font-size:9.8px;font-weight:bold;transform:scaleX(0.87);color:#111">80,5</div><div class="t" style="left:843.175px;width:39.84500000000003px;text-align:center;top:343.79999999999995px;font-size:9.8px;font-weight:bold;transform:scaleX(0.87);color:#111">82,3</div><div class="t" style="left:883.02px;width:39.84500000000003px;text-align:center;top:343.79999999999995px;font-size:9.8px;font-weight:bold;transform:scaleX(0.87);color:#111">76,0</div><div class="t" style="left:922.865px;width:39.84500000000003px;text-align:center;top:343.79999999999995px;font-size:9.8px;font-weight:bold;transform:scaleX(0.87);color:#111">75,2</div><div class="t" style="left:962.71px;width:39.844999999999914px;text-align:center;top:343.79999999999995px;font-size:9.8px;font-weight:bold;transform:scaleX(0.87);color:#111">74,1</div><div class="t" style="left:1002.555px;width:39.84500000000014px;text-align:center;top:343.79999999999995px;font-size:9.8px;font-weight:bold;transform:scaleX(0.87);color:#111">73,9</div><div class="t" style="left:1042.4px;width:39.8449999999998px;text-align:center;top:343.79999999999995px;font-size:9.8px;font-weight:bold;transform:scaleX(0.87);color:#111">72,0</div><div class="t" style="left:1082.245px;width:39.84500000000003px;text-align:center;top:343.79999999999995px;font-size:9.8px;font-weight:bold;transform:scaleX(0.87);color:#111">72,1</div><div class="t" style="left:1122.09px;width:39.84500000000003px;text-align:center;top:343.79999999999995px;font-size:9.8px;font-weight:bold;transform:scaleX(0.87);color:#111">68,9</div><div class="t" style="left:1161.935px;width:39.84500000000003px;text-align:center;top:343.79999999999995px;font-size:9.8px;font-weight:bold;transform:scaleX(0.87);color:#111">70,8</div><div class="t" style="left:1201.78px;width:39.84500000000003px;text-align:center;top:343.79999999999995px;font-size:9.8px;font-weight:bold;transform:scaleX(0.87);color:#111">57,5</div><div class="t" style="left:1241.625px;width:39.84500000000003px;text-align:center;top:343.79999999999995px;font-size:9.8px;font-weight:bold;transform:scaleX(0.87);color:#111">54,9</div><div class="t" style="left:1281.47px;width:39.84500000000003px;text-align:center;top:343.79999999999995px;font-size:9.8px;font-weight:bold;transform:scaleX(0.87);color:#111">50,4</div><div class="t" style="left:1321.315px;width:39.8449999999998px;text-align:center;top:343.79999999999995px;font-size:9.8px;font-weight:bold;transform:scaleX(0.87);color:#111">45,4</div><div class="t" style="left:1361.1599999999999px;width:39.84500000000003px;text-align:center;top:343.79999999999995px;font-size:9.8px;font-weight:bold;transform:scaleX(0.87);color:#111">35,3</div><div class="t" style="left:1401.0049999999999px;width:39.84500000000003px;text-align:center;top:343.79999999999995px;font-size:9.8px;font-weight:bold;transform:scaleX(0.87);color:#111">38,0</div><div class="t" style="left:1440.85px;width:39.84500000000003px;text-align:center;top:343.79999999999995px;font-size:9.8px;font-weight:bold;transform:scaleX(0.87);color:#111">31,8</div><svg class="a" style="left:14px;top:355px" width="11" height="10" viewBox="0 0 11 10" shape-rendering="crispEdges"><path d="M0 1 H3 V2 H6 V1 H9 V3 H10 V9 H0Z" fill="#140c10"/><rect x="2" y="3" width="3" height="3" fill="#7A2090"/><rect x="4" y="5" width="2" height="3" fill="#60187A"/><path d="M1 7 L3 6 L5 5 L7 3" stroke="#C89A40" stroke-width="1.2" fill="none" shape-rendering="auto"/><rect x="8" y="3" width="2" height="5" fill="#9A1040"/><rect x="6" y="5" width="2" height="3" fill="#202060"/></svg><div class="t" style="left:25.5px;top:355.0799999999999px;font-size:9.8px;font-weight:bold;transform:scaleX(0.87);transform-origin:0 0;color:#111">2</div><div class="t" style="left:78.3px;width:63.39999999999999px;text-align:center;top:355.0799999999999px;font-size:9.8px;font-weight:bold;transform:scaleX(0.87);color:#111">30 ~ 90 dB</div><div class="t" style="left:141.7px;width:63.80000000000001px;text-align:center;top:355.0799999999999px;font-size:9.8px;font-weight:bold;transform:scaleX(0.87);color:#111">FLAT</div><div class="t" style="left:205.5px;width:40.0px;text-align:center;top:355.0799999999999px;font-size:9.8px;font-weight:bold;transform:scaleX(0.87);color:#111">102,0</div><div class="t" style="left:245.5px;width:39.84500000000003px;text-align:center;top:355.0799999999999px;font-size:9.8px;font-weight:bold;transform:scaleX(0.87);color:#111">80,3</div><div class="t" style="left:285.345px;width:39.84499999999997px;text-align:center;top:355.0799999999999px;font-size:9.8px;font-weight:bold;transform:scaleX(0.87);color:#111">86,3</div><div class="t" style="left:325.19px;width:39.84499999999997px;text-align:center;top:355.0799999999999px;font-size:9.8px;font-weight:bold;transform:scaleX(0.87);color:#111">90,8</div><div class="t" style="left:365.03499999999997px;width:39.84500000000003px;text-align:center;top:355.0799999999999px;font-size:9.8px;font-weight:bold;transform:scaleX(0.87);color:#111">96,5</div><div class="t" style="left:404.88px;width:39.84500000000003px;text-align:center;top:355.0799999999999px;font-size:9.8px;font-weight:bold;transform:scaleX(0.87);color:#111">97,0</div><div class="t" style="left:444.725px;width:39.84499999999997px;text-align:center;top:355.0799999999999px;font-size:9.8px;font-weight:bold;transform:scaleX(0.87);color:#111">87,8</div><div class="t" style="left:484.57px;width:39.84499999999997px;text-align:center;top:355.0799999999999px;font-size:9.8px;font-weight:bold;transform:scaleX(0.87);color:#111">83,8</div><div class="t" style="left:524.415px;width:39.84500000000003px;text-align:center;top:355.0799999999999px;font-size:9.8px;font-weight:bold;transform:scaleX(0.87);color:#111">81,1</div><div class="t" style="left:564.26px;width:39.84500000000003px;text-align:center;top:355.0799999999999px;font-size:9.8px;font-weight:bold;transform:scaleX(0.87);color:#111">82,0</div><div class="t" style="left:604.105px;width:39.84500000000003px;text-align:center;top:355.0799999999999px;font-size:9.8px;font-weight:bold;transform:scaleX(0.87);color:#111">82,2</div><div class="t" style="left:643.95px;width:39.844999999999914px;text-align:center;top:355.0799999999999px;font-size:9.8px;font-weight:bold;transform:scaleX(0.87);color:#111">80,0</div><div class="t" style="left:683.795px;width:39.84500000000003px;text-align:center;top:355.0799999999999px;font-size:9.8px;font-weight:bold;transform:scaleX(0.87);color:#111">83,4</div><div class="t" style="left:723.64px;width:39.84500000000003px;text-align:center;top:355.0799999999999px;font-size:9.8px;font-weight:bold;transform:scaleX(0.87);color:#111">79,7</div><div class="t" style="left:763.485px;width:39.844999999999914px;text-align:center;top:355.0799999999999px;font-size:9.8px;font-weight:bold;transform:scaleX(0.87);color:#111">78,4</div><div class="t" style="left:803.3299999999999px;width:39.84500000000003px;text-align:center;top:355.0799999999999px;font-size:9.8px;font-weight:bold;transform:scaleX(0.87);color:#111">82,7</div><div class="t" style="left:843.175px;width:39.84500000000003px;text-align:center;top:355.0799999999999px;font-size:9.8px;font-weight:bold;transform:scaleX(0.87);color:#111">86,6</div><div class="t" style="left:883.02px;width:39.84500000000003px;text-align:center;top:355.0799999999999px;font-size:9.8px;font-weight:bold;transform:scaleX(0.87);color:#111">82,8</div><div class="t" style="left:922.865px;width:39.84500000000003px;text-align:center;top:355.0799999999999px;font-size:9.8px;font-weight:bold;transform:scaleX(0.87);color:#111">78,2</div><div class="t" style="left:962.71px;width:39.844999999999914px;text-align:center;top:355.0799999999999px;font-size:9.8px;font-weight:bold;transform:scaleX(0.87);color:#111">77,8</div><div class="t" style="left:1002.555px;width:39.84500000000014px;text-align:center;top:355.0799999999999px;font-size:9.8px;font-weight:bold;transform:scaleX(0.87);color:#111">74,6</div><div class="t" style="left:1042.4px;width:39.8449999999998px;text-align:center;top:355.0799999999999px;font-size:9.8px;font-weight:bold;transform:scaleX(0.87);color:#111">76,0</div><div class="t" style="left:1082.245px;width:39.84500000000003px;text-align:center;top:355.0799999999999px;font-size:9.8px;font-weight:bold;transform:scaleX(0.87);color:#111">74,9</div><div class="t" style="left:1122.09px;width:39.84500000000003px;text-align:center;top:355.0799999999999px;font-size:9.8px;font-weight:bold;transform:scaleX(0.87);color:#111">76,5</div><div class="t" style="left:1161.935px;width:39.84500000000003px;text-align:center;top:355.0799999999999px;font-size:9.8px;font-weight:bold;transform:scaleX(0.87);color:#111">75,9</div><div class="t" style="left:1201.78px;width:39.84500000000003px;text-align:center;top:355.0799999999999px;font-size:9.8px;font-weight:bold;transform:scaleX(0.87);color:#111">73,9</div><div class="t" style="left:1241.625px;width:39.84500000000003px;text-align:center;top:355.0799999999999px;font-size:9.8px;font-weight:bold;transform:scaleX(0.87);color:#111">80,0</div><div class="t" style="left:1281.47px;width:39.84500000000003px;text-align:center;top:355.0799999999999px;font-size:9.8px;font-weight:bold;transform:scaleX(0.87);color:#111">74,0</div><div class="t" style="left:1321.315px;width:39.8449999999998px;text-align:center;top:355.0799999999999px;font-size:9.8px;font-weight:bold;transform:scaleX(0.87);color:#111">75,7</div><div class="t" style="left:1361.1599999999999px;width:39.84500000000003px;text-align:center;top:355.0799999999999px;font-size:9.8px;font-weight:bold;transform:scaleX(0.87);color:#111">70,1</div><div class="t" style="left:1401.0049999999999px;width:39.84500000000003px;text-align:center;top:355.0799999999999px;font-size:9.8px;font-weight:bold;transform:scaleX(0.87);color:#111">71,0</div><div class="t" style="left:1440.85px;width:39.84500000000003px;text-align:center;top:355.0799999999999px;font-size:9.8px;font-weight:bold;transform:scaleX(0.87);color:#111">68,2</div><svg class="a" style="left:14px;top:366px" width="11" height="10" viewBox="0 0 11 10" shape-rendering="crispEdges"><path d="M0 1 H3 V2 H6 V1 H9 V3 H10 V9 H0Z" fill="#140c10"/><rect x="2" y="3" width="3" height="3" fill="#7A2090"/><rect x="4" y="5" width="2" height="3" fill="#60187A"/><path d="M1 7 L3 6 L5 5 L7 3" stroke="#C89A40" stroke-width="1.2" fill="none" shape-rendering="auto"/><rect x="8" y="3" width="2" height="5" fill="#9A1040"/><rect x="6" y="5" width="2" height="3" fill="#202060"/></svg><div class="t" style="left:25.5px;top:366.35999999999996px;font-size:9.8px;font-weight:bold;transform:scaleX(0.87);transform-origin:0 0;color:#111">3</div><div class="t" style="left:78.3px;width:63.39999999999999px;text-align:center;top:366.35999999999996px;font-size:9.8px;font-weight:bold;transform:scaleX(0.87);color:#111">30 ~ 90 dB</div><div class="t" style="left:141.7px;width:63.80000000000001px;text-align:center;top:366.35999999999996px;font-size:9.8px;font-weight:bold;transform:scaleX(0.87);color:#111">FLAT</div><div class="t" style="left:205.5px;width:40.0px;text-align:center;top:366.35999999999996px;font-size:9.8px;font-weight:bold;transform:scaleX(0.87);color:#111">94,0</div><div class="t" style="left:245.5px;width:39.84500000000003px;text-align:center;top:366.35999999999996px;font-size:9.8px;font-weight:bold;transform:scaleX(0.87);color:#111">73,4</div><div class="t" style="left:285.345px;width:39.84499999999997px;text-align:center;top:366.35999999999996px;font-size:9.8px;font-weight:bold;transform:scaleX(0.87);color:#111">78,5</div><div class="t" style="left:325.19px;width:39.84499999999997px;text-align:center;top:366.35999999999996px;font-size:9.8px;font-weight:bold;transform:scaleX(0.87);color:#111">81,8</div><div class="t" style="left:365.03499999999997px;width:39.84500000000003px;text-align:center;top:366.35999999999996px;font-size:9.8px;font-weight:bold;transform:scaleX(0.87);color:#111">86,6</div><div class="t" style="left:404.88px;width:39.84500000000003px;text-align:center;top:366.35999999999996px;font-size:9.8px;font-weight:bold;transform:scaleX(0.87);color:#111">82,2</div><div class="t" style="left:444.725px;width:39.84499999999997px;text-align:center;top:366.35999999999996px;font-size:9.8px;font-weight:bold;transform:scaleX(0.87);color:#111">82,1</div><div class="t" style="left:484.57px;width:39.84499999999997px;text-align:center;top:366.35999999999996px;font-size:9.8px;font-weight:bold;transform:scaleX(0.87);color:#111">77,4</div><div class="t" style="left:524.415px;width:39.84500000000003px;text-align:center;top:366.35999999999996px;font-size:9.8px;font-weight:bold;transform:scaleX(0.87);color:#111">77,3</div><div class="t" style="left:564.26px;width:39.84500000000003px;text-align:center;top:366.35999999999996px;font-size:9.8px;font-weight:bold;transform:scaleX(0.87);color:#111">84,4</div><div class="t" style="left:604.105px;width:39.84500000000003px;text-align:center;top:366.35999999999996px;font-size:9.8px;font-weight:bold;transform:scaleX(0.87);color:#111">79,6</div><div class="t" style="left:643.95px;width:39.844999999999914px;text-align:center;top:366.35999999999996px;font-size:9.8px;font-weight:bold;transform:scaleX(0.87);color:#111">76,6</div><div class="t" style="left:683.795px;width:39.84500000000003px;text-align:center;top:366.35999999999996px;font-size:9.8px;font-weight:bold;transform:scaleX(0.87);color:#111">82,2</div><div class="t" style="left:723.64px;width:39.84500000000003px;text-align:center;top:366.35999999999996px;font-size:9.8px;font-weight:bold;transform:scaleX(0.87);color:#111">80,3</div><div class="t" style="left:763.485px;width:39.844999999999914px;text-align:center;top:366.35999999999996px;font-size:9.8px;font-weight:bold;transform:scaleX(0.87);color:#111">74,6</div><div class="t" style="left:803.3299999999999px;width:39.84500000000003px;text-align:center;top:366.35999999999996px;font-size:9.8px;font-weight:bold;transform:scaleX(0.87);color:#111">78,1</div><div class="t" style="left:843.175px;width:39.84500000000003px;text-align:center;top:366.35999999999996px;font-size:9.8px;font-weight:bold;transform:scaleX(0.87);color:#111">78,9</div><div class="t" style="left:883.02px;width:39.84500000000003px;text-align:center;top:366.35999999999996px;font-size:9.8px;font-weight:bold;transform:scaleX(0.87);color:#111">80,9</div><div class="t" style="left:922.865px;width:39.84500000000003px;text-align:center;top:366.35999999999996px;font-size:9.8px;font-weight:bold;transform:scaleX(0.87);color:#111">69,8</div><div class="t" style="left:962.71px;width:39.844999999999914px;text-align:center;top:366.35999999999996px;font-size:9.8px;font-weight:bold;transform:scaleX(0.87);color:#111">67,6</div><div class="t" style="left:1002.555px;width:39.84500000000014px;text-align:center;top:366.35999999999996px;font-size:9.8px;font-weight:bold;transform:scaleX(0.87);color:#111">70,3</div><div class="t" style="left:1042.4px;width:39.8449999999998px;text-align:center;top:366.35999999999996px;font-size:9.8px;font-weight:bold;transform:scaleX(0.87);color:#111">76,8</div><div class="t" style="left:1082.245px;width:39.84500000000003px;text-align:center;top:366.35999999999996px;font-size:9.8px;font-weight:bold;transform:scaleX(0.87);color:#111">75,8</div><div class="t" style="left:1122.09px;width:39.84500000000003px;text-align:center;top:366.35999999999996px;font-size:9.8px;font-weight:bold;transform:scaleX(0.87);color:#111">74,0</div><div class="t" style="left:1161.935px;width:39.84500000000003px;text-align:center;top:366.35999999999996px;font-size:9.8px;font-weight:bold;transform:scaleX(0.87);color:#111">73,5</div><div class="t" style="left:1201.78px;width:39.84500000000003px;text-align:center;top:366.35999999999996px;font-size:9.8px;font-weight:bold;transform:scaleX(0.87);color:#111">75,2</div><div class="t" style="left:1241.625px;width:39.84500000000003px;text-align:center;top:366.35999999999996px;font-size:9.8px;font-weight:bold;transform:scaleX(0.87);color:#111">74,0</div><div class="t" style="left:1281.47px;width:39.84500000000003px;text-align:center;top:366.35999999999996px;font-size:9.8px;font-weight:bold;transform:scaleX(0.87);color:#111">68,9</div><div class="t" style="left:1321.315px;width:39.8449999999998px;text-align:center;top:366.35999999999996px;font-size:9.8px;font-weight:bold;transform:scaleX(0.87);color:#111">68,1</div><div class="t" style="left:1361.1599999999999px;width:39.84500000000003px;text-align:center;top:366.35999999999996px;font-size:9.8px;font-weight:bold;transform:scaleX(0.87);color:#111">64,0</div><div class="t" style="left:1401.0049999999999px;width:39.84500000000003px;text-align:center;top:366.35999999999996px;font-size:9.8px;font-weight:bold;transform:scaleX(0.87);color:#111">62,4</div><div class="t" style="left:1440.85px;width:39.84500000000003px;text-align:center;top:366.35999999999996px;font-size:9.8px;font-weight:bold;transform:scaleX(0.87);color:#111">50,6</div><svg class="a" style="left:14px;top:377px" width="11" height="10" viewBox="0 0 11 10" shape-rendering="crispEdges"><path d="M0 1 H3 V2 H6 V1 H9 V3 H10 V9 H0Z" fill="#140c10"/><rect x="2" y="3" width="3" height="3" fill="#7A2090"/><rect x="4" y="5" width="2" height="3" fill="#60187A"/><path d="M1 7 L3 6 L5 5 L7 3" stroke="#C89A40" stroke-width="1.2" fill="none" shape-rendering="auto"/><rect x="8" y="3" width="2" height="5" fill="#9A1040"/><rect x="6" y="5" width="2" height="3" fill="#202060"/></svg><div class="t" style="left:25.5px;top:377.63999999999993px;font-size:9.8px;font-weight:bold;transform:scaleX(0.87);transform-origin:0 0;color:#111">4</div><div class="t" style="left:78.3px;width:63.39999999999999px;text-align:center;top:377.63999999999993px;font-size:9.8px;font-weight:bold;transform:scaleX(0.87);color:#111">30 ~ 90 dB</div><div class="t" style="left:141.7px;width:63.80000000000001px;text-align:center;top:377.63999999999993px;font-size:9.8px;font-weight:bold;transform:scaleX(0.87);color:#111">FLAT</div><div class="t" style="left:205.5px;width:40.0px;text-align:center;top:377.63999999999993px;font-size:9.8px;font-weight:bold;transform:scaleX(0.87);color:#111">83,0</div><div class="t" style="left:245.5px;width:39.84500000000003px;text-align:center;top:377.63999999999993px;font-size:9.8px;font-weight:bold;transform:scaleX(0.87);color:#111">68,9</div><div class="t" style="left:285.345px;width:39.84499999999997px;text-align:center;top:377.63999999999993px;font-size:9.8px;font-weight:bold;transform:scaleX(0.87);color:#111">65,6</div><div class="t" style="left:325.19px;width:39.84499999999997px;text-align:center;top:377.63999999999993px;font-size:9.8px;font-weight:bold;transform:scaleX(0.87);color:#111">70,8</div><div class="t" style="left:365.03499999999997px;width:39.84500000000003px;text-align:center;top:377.63999999999993px;font-size:9.8px;font-weight:bold;transform:scaleX(0.87);color:#111">72,5</div><div class="t" style="left:404.88px;width:39.84500000000003px;text-align:center;top:377.63999999999993px;font-size:9.8px;font-weight:bold;transform:scaleX(0.87);color:#111">70,5</div><div class="t" style="left:444.725px;width:39.84499999999997px;text-align:center;top:377.63999999999993px;font-size:9.8px;font-weight:bold;transform:scaleX(0.87);color:#111">69,2</div><div class="t" style="left:484.57px;width:39.84499999999997px;text-align:center;top:377.63999999999993px;font-size:9.8px;font-weight:bold;transform:scaleX(0.87);color:#111">73,1</div><div class="t" style="left:524.415px;width:39.84500000000003px;text-align:center;top:377.63999999999993px;font-size:9.8px;font-weight:bold;transform:scaleX(0.87);color:#111">72,1</div><div class="t" style="left:564.26px;width:39.84500000000003px;text-align:center;top:377.63999999999993px;font-size:9.8px;font-weight:bold;transform:scaleX(0.87);color:#111">70,3</div><div class="t" style="left:604.105px;width:39.84500000000003px;text-align:center;top:377.63999999999993px;font-size:9.8px;font-weight:bold;transform:scaleX(0.87);color:#111">66,1</div><div class="t" style="left:643.95px;width:39.844999999999914px;text-align:center;top:377.63999999999993px;font-size:9.8px;font-weight:bold;transform:scaleX(0.87);color:#111">68,7</div><div class="t" style="left:683.795px;width:39.84500000000003px;text-align:center;top:377.63999999999993px;font-size:9.8px;font-weight:bold;transform:scaleX(0.87);color:#111">71,1</div><div class="t" style="left:723.64px;width:39.84500000000003px;text-align:center;top:377.63999999999993px;font-size:9.8px;font-weight:bold;transform:scaleX(0.87);color:#111">71,6</div><div class="t" style="left:763.485px;width:39.844999999999914px;text-align:center;top:377.63999999999993px;font-size:9.8px;font-weight:bold;transform:scaleX(0.87);color:#111">66,4</div><div class="t" style="left:803.3299999999999px;width:39.84500000000003px;text-align:center;top:377.63999999999993px;font-size:9.8px;font-weight:bold;transform:scaleX(0.87);color:#111">66,8</div><div class="t" style="left:843.175px;width:39.84500000000003px;text-align:center;top:377.63999999999993px;font-size:9.8px;font-weight:bold;transform:scaleX(0.87);color:#111">65,0</div><div class="t" style="left:883.02px;width:39.84500000000003px;text-align:center;top:377.63999999999993px;font-size:9.8px;font-weight:bold;transform:scaleX(0.87);color:#111">64,8</div><div class="t" style="left:922.865px;width:39.84500000000003px;text-align:center;top:377.63999999999993px;font-size:9.8px;font-weight:bold;transform:scaleX(0.87);color:#111">63,7</div><div class="t" style="left:962.71px;width:39.844999999999914px;text-align:center;top:377.63999999999993px;font-size:9.8px;font-weight:bold;transform:scaleX(0.87);color:#111">63,3</div><div class="t" style="left:1002.555px;width:39.84500000000014px;text-align:center;top:377.63999999999993px;font-size:9.8px;font-weight:bold;transform:scaleX(0.87);color:#111">67,6</div><div class="t" style="left:1042.4px;width:39.8449999999998px;text-align:center;top:377.63999999999993px;font-size:9.8px;font-weight:bold;transform:scaleX(0.87);color:#111">69,1</div><div class="t" style="left:1082.245px;width:39.84500000000003px;text-align:center;top:377.63999999999993px;font-size:9.8px;font-weight:bold;transform:scaleX(0.87);color:#111">72,0</div><div class="t" style="left:1122.09px;width:39.84500000000003px;text-align:center;top:377.63999999999993px;font-size:9.8px;font-weight:bold;transform:scaleX(0.87);color:#111">66,5</div><div class="t" style="left:1161.935px;width:39.84500000000003px;text-align:center;top:377.63999999999993px;font-size:9.8px;font-weight:bold;transform:scaleX(0.87);color:#111">67,3</div><div class="t" style="left:1201.78px;width:39.84500000000003px;text-align:center;top:377.63999999999993px;font-size:9.8px;font-weight:bold;transform:scaleX(0.87);color:#111">66,9</div><div class="t" style="left:1241.625px;width:39.84500000000003px;text-align:center;top:377.63999999999993px;font-size:9.8px;font-weight:bold;transform:scaleX(0.87);color:#111">68,3</div><div class="t" style="left:1281.47px;width:39.84500000000003px;text-align:center;top:377.63999999999993px;font-size:9.8px;font-weight:bold;transform:scaleX(0.87);color:#111">61,2</div><div class="t" style="left:1321.315px;width:39.8449999999998px;text-align:center;top:377.63999999999993px;font-size:9.8px;font-weight:bold;transform:scaleX(0.87);color:#111">65,9</div><div class="t" style="left:1361.1599999999999px;width:39.84500000000003px;text-align:center;top:377.63999999999993px;font-size:9.8px;font-weight:bold;transform:scaleX(0.87);color:#111">61,4</div><div class="t" style="left:1401.0049999999999px;width:39.84500000000003px;text-align:center;top:377.63999999999993px;font-size:9.8px;font-weight:bold;transform:scaleX(0.87);color:#111">62,8</div><div class="t" style="left:1440.85px;width:39.84500000000003px;text-align:center;top:377.63999999999993px;font-size:9.8px;font-weight:bold;transform:scaleX(0.87);color:#111">59,6</div><svg class="a" style="left:14px;top:389px" width="11" height="10" viewBox="0 0 11 10" shape-rendering="crispEdges"><path d="M0 1 H3 V2 H6 V1 H9 V3 H10 V9 H0Z" fill="#140c10"/><rect x="2" y="3" width="3" height="3" fill="#7A2090"/><rect x="4" y="5" width="2" height="3" fill="#60187A"/><path d="M1 7 L3 6 L5 5 L7 3" stroke="#C89A40" stroke-width="1.2" fill="none" shape-rendering="auto"/><rect x="8" y="3" width="2" height="5" fill="#9A1040"/><rect x="6" y="5" width="2" height="3" fill="#202060"/></svg><div class="t" style="left:25.5px;top:388.91999999999996px;font-size:9.8px;font-weight:bold;transform:scaleX(0.87);transform-origin:0 0;color:#111">5</div><div class="t" style="left:78.3px;width:63.39999999999999px;text-align:center;top:388.91999999999996px;font-size:9.8px;font-weight:bold;transform:scaleX(0.87);color:#111">30 ~ 90 dB</div><div class="t" style="left:141.7px;width:63.80000000000001px;text-align:center;top:388.91999999999996px;font-size:9.8px;font-weight:bold;transform:scaleX(0.87);color:#111">FLAT</div><div class="t" style="left:205.5px;width:40.0px;text-align:center;top:388.91999999999996px;font-size:9.8px;font-weight:bold;transform:scaleX(0.87);color:#111">80,2</div><div class="t" style="left:245.5px;width:39.84500000000003px;text-align:center;top:388.91999999999996px;font-size:9.8px;font-weight:bold;transform:scaleX(0.87);color:#111">47,4</div><div class="t" style="left:285.345px;width:39.84499999999997px;text-align:center;top:388.91999999999996px;font-size:9.8px;font-weight:bold;transform:scaleX(0.87);color:#111">53,9</div><div class="t" style="left:325.19px;width:39.84499999999997px;text-align:center;top:388.91999999999996px;font-size:9.8px;font-weight:bold;transform:scaleX(0.87);color:#111">59,1</div><div class="t" style="left:365.03499999999997px;width:39.84500000000003px;text-align:center;top:388.91999999999996px;font-size:9.8px;font-weight:bold;transform:scaleX(0.87);color:#111">59,9</div><div class="t" style="left:404.88px;width:39.84500000000003px;text-align:center;top:388.91999999999996px;font-size:9.8px;font-weight:bold;transform:scaleX(0.87);color:#111">73,6</div><div class="t" style="left:444.725px;width:39.84499999999997px;text-align:center;top:388.91999999999996px;font-size:9.8px;font-weight:bold;transform:scaleX(0.87);color:#111">72,1</div><div class="t" style="left:484.57px;width:39.84499999999997px;text-align:center;top:388.91999999999996px;font-size:9.8px;font-weight:bold;transform:scaleX(0.87);color:#111">73,8</div><div class="t" style="left:524.415px;width:39.84500000000003px;text-align:center;top:388.91999999999996px;font-size:9.8px;font-weight:bold;transform:scaleX(0.87);color:#111">71,4</div><div class="t" style="left:564.26px;width:39.84500000000003px;text-align:center;top:388.91999999999996px;font-size:9.8px;font-weight:bold;transform:scaleX(0.87);color:#111">70,8</div><div class="t" style="left:604.105px;width:39.84500000000003px;text-align:center;top:388.91999999999996px;font-size:9.8px;font-weight:bold;transform:scaleX(0.87);color:#111">67,0</div><div class="t" style="left:643.95px;width:39.844999999999914px;text-align:center;top:388.91999999999996px;font-size:9.8px;font-weight:bold;transform:scaleX(0.87);color:#111">62,8</div><div class="t" style="left:683.795px;width:39.84500000000003px;text-align:center;top:388.91999999999996px;font-size:9.8px;font-weight:bold;transform:scaleX(0.87);color:#111">58,2</div><div class="t" style="left:723.64px;width:39.84500000000003px;text-align:center;top:388.91999999999996px;font-size:9.8px;font-weight:bold;transform:scaleX(0.87);color:#111">59,1</div><div class="t" style="left:763.485px;width:39.844999999999914px;text-align:center;top:388.91999999999996px;font-size:9.8px;font-weight:bold;transform:scaleX(0.87);color:#111">58,4</div><div class="t" style="left:803.3299999999999px;width:39.84500000000003px;text-align:center;top:388.91999999999996px;font-size:9.8px;font-weight:bold;transform:scaleX(0.87);color:#111">55,6</div><div class="t" style="left:843.175px;width:39.84500000000003px;text-align:center;top:388.91999999999996px;font-size:9.8px;font-weight:bold;transform:scaleX(0.87);color:#111">53,6</div><div class="t" style="left:883.02px;width:39.84500000000003px;text-align:center;top:388.91999999999996px;font-size:9.8px;font-weight:bold;transform:scaleX(0.87);color:#111">57,8</div><div class="t" style="left:922.865px;width:39.84500000000003px;text-align:center;top:388.91999999999996px;font-size:9.8px;font-weight:bold;transform:scaleX(0.87);color:#111">56,0</div><div class="t" style="left:962.71px;width:39.844999999999914px;text-align:center;top:388.91999999999996px;font-size:9.8px;font-weight:bold;transform:scaleX(0.87);color:#111">59,0</div><div class="t" style="left:1002.555px;width:39.84500000000014px;text-align:center;top:388.91999999999996px;font-size:9.8px;font-weight:bold;transform:scaleX(0.87);color:#111">59,1</div><div class="t" style="left:1042.4px;width:39.8449999999998px;text-align:center;top:388.91999999999996px;font-size:9.8px;font-weight:bold;transform:scaleX(0.87);color:#111">58,1</div><div class="t" style="left:1082.245px;width:39.84500000000003px;text-align:center;top:388.91999999999996px;font-size:9.8px;font-weight:bold;transform:scaleX(0.87);color:#111">58,2</div><div class="t" style="left:1122.09px;width:39.84500000000003px;text-align:center;top:388.91999999999996px;font-size:9.8px;font-weight:bold;transform:scaleX(0.87);color:#111">57,2</div><div class="t" style="left:1161.935px;width:39.84500000000003px;text-align:center;top:388.91999999999996px;font-size:9.8px;font-weight:bold;transform:scaleX(0.87);color:#111">55,7</div><div class="t" style="left:1201.78px;width:39.84500000000003px;text-align:center;top:388.91999999999996px;font-size:9.8px;font-weight:bold;transform:scaleX(0.87);color:#111">56,0</div><div class="t" style="left:1241.625px;width:39.84500000000003px;text-align:center;top:388.91999999999996px;font-size:9.8px;font-weight:bold;transform:scaleX(0.87);color:#111">58,4</div><div class="t" style="left:1281.47px;width:39.84500000000003px;text-align:center;top:388.91999999999996px;font-size:9.8px;font-weight:bold;transform:scaleX(0.87);color:#111">54,9</div><div class="t" style="left:1321.315px;width:39.8449999999998px;text-align:center;top:388.91999999999996px;font-size:9.8px;font-weight:bold;transform:scaleX(0.87);color:#111">56,7</div><div class="t" style="left:1361.1599999999999px;width:39.84500000000003px;text-align:center;top:388.91999999999996px;font-size:9.8px;font-weight:bold;transform:scaleX(0.87);color:#111">54,4</div><div class="t" style="left:1401.0049999999999px;width:39.84500000000003px;text-align:center;top:388.91999999999996px;font-size:9.8px;font-weight:bold;transform:scaleX(0.87);color:#111">50,3</div><div class="t" style="left:1440.85px;width:39.84500000000003px;text-align:center;top:388.91999999999996px;font-size:9.8px;font-weight:bold;transform:scaleX(0.87);color:#111">49,8</div><svg class="a" style="left:14px;top:400px" width="11" height="10" viewBox="0 0 11 10" shape-rendering="crispEdges"><path d="M0 1 H3 V2 H6 V1 H9 V3 H10 V9 H0Z" fill="#140c10"/><rect x="2" y="3" width="3" height="3" fill="#7A2090"/><rect x="4" y="5" width="2" height="3" fill="#60187A"/><path d="M1 7 L3 6 L5 5 L7 3" stroke="#C89A40" stroke-width="1.2" fill="none" shape-rendering="auto"/><rect x="8" y="3" width="2" height="5" fill="#9A1040"/><rect x="6" y="5" width="2" height="3" fill="#202060"/></svg><div class="t" style="left:25.5px;top:400.19999999999993px;font-size:9.8px;font-weight:bold;transform:scaleX(0.87);transform-origin:0 0;color:#111">6</div><div class="t" style="left:78.3px;width:63.39999999999999px;text-align:center;top:400.19999999999993px;font-size:9.8px;font-weight:bold;transform:scaleX(0.87);color:#111">30 ~ 90 dB</div><div class="t" style="left:141.7px;width:63.80000000000001px;text-align:center;top:400.19999999999993px;font-size:9.8px;font-weight:bold;transform:scaleX(0.87);color:#111">FLAT</div><div class="t" style="left:205.5px;width:40.0px;text-align:center;top:400.19999999999993px;font-size:9.8px;font-weight:bold;transform:scaleX(0.87);color:#111">72,1</div><div class="t" style="left:245.5px;width:39.84500000000003px;text-align:center;top:400.19999999999993px;font-size:9.8px;font-weight:bold;transform:scaleX(0.87);color:#111">43,1</div><div class="t" style="left:285.345px;width:39.84499999999997px;text-align:center;top:400.19999999999993px;font-size:9.8px;font-weight:bold;transform:scaleX(0.87);color:#111">49,1</div><div class="t" style="left:325.19px;width:39.84499999999997px;text-align:center;top:400.19999999999993px;font-size:9.8px;font-weight:bold;transform:scaleX(0.87);color:#111">40,8</div><div class="t" style="left:365.03499999999997px;width:39.84500000000003px;text-align:center;top:400.19999999999993px;font-size:9.8px;font-weight:bold;transform:scaleX(0.87);color:#111">35,6</div><div class="t" style="left:404.88px;width:39.84500000000003px;text-align:center;top:400.19999999999993px;font-size:9.8px;font-weight:bold;transform:scaleX(0.87);color:#111">42,6</div><div class="t" style="left:444.725px;width:39.84499999999997px;text-align:center;top:400.19999999999993px;font-size:9.8px;font-weight:bold;transform:scaleX(0.87);color:#111">31,2</div><div class="t" style="left:484.57px;width:39.84499999999997px;text-align:center;top:400.19999999999993px;font-size:9.8px;font-weight:bold;transform:scaleX(0.87);color:#111">35,0</div><div class="t" style="left:524.415px;width:39.84500000000003px;text-align:center;top:400.19999999999993px;font-size:9.8px;font-weight:bold;transform:scaleX(0.87);color:#111">37,4</div><div class="t" style="left:564.26px;width:39.84500000000003px;text-align:center;top:400.19999999999993px;font-size:9.8px;font-weight:bold;transform:scaleX(0.87);color:#111">41,6</div><div class="t" style="left:604.105px;width:39.84500000000003px;text-align:center;top:400.19999999999993px;font-size:9.8px;font-weight:bold;transform:scaleX(0.87);color:#111">49,8</div><div class="t" style="left:643.95px;width:39.844999999999914px;text-align:center;top:400.19999999999993px;font-size:9.8px;font-weight:bold;transform:scaleX(0.87);color:#111">58,5</div><div class="t" style="left:683.795px;width:39.84500000000003px;text-align:center;top:400.19999999999993px;font-size:9.8px;font-weight:bold;transform:scaleX(0.87);color:#111">62,3</div><div class="t" style="left:723.64px;width:39.84500000000003px;text-align:center;top:400.19999999999993px;font-size:9.8px;font-weight:bold;transform:scaleX(0.87);color:#111">55,6</div><div class="t" style="left:763.485px;width:39.844999999999914px;text-align:center;top:400.19999999999993px;font-size:9.8px;font-weight:bold;transform:scaleX(0.87);color:#111">55,6</div><div class="t" style="left:803.3299999999999px;width:39.84500000000003px;text-align:center;top:400.19999999999993px;font-size:9.8px;font-weight:bold;transform:scaleX(0.87);color:#111">55,6</div><div class="t" style="left:843.175px;width:39.84500000000003px;text-align:center;top:400.19999999999993px;font-size:9.8px;font-weight:bold;transform:scaleX(0.87);color:#111">50,6</div><div class="t" style="left:883.02px;width:39.84500000000003px;text-align:center;top:400.19999999999993px;font-size:9.8px;font-weight:bold;transform:scaleX(0.87);color:#111">53,5</div><div class="t" style="left:922.865px;width:39.84500000000003px;text-align:center;top:400.19999999999993px;font-size:9.8px;font-weight:bold;transform:scaleX(0.87);color:#111">56,8</div><div class="t" style="left:962.71px;width:39.844999999999914px;text-align:center;top:400.19999999999993px;font-size:9.8px;font-weight:bold;transform:scaleX(0.87);color:#111">60,0</div><div class="t" style="left:1002.555px;width:39.84500000000014px;text-align:center;top:400.19999999999993px;font-size:9.8px;font-weight:bold;transform:scaleX(0.87);color:#111">58,0</div><div class="t" style="left:1042.4px;width:39.8449999999998px;text-align:center;top:400.19999999999993px;font-size:9.8px;font-weight:bold;transform:scaleX(0.87);color:#111">59,8</div><div class="t" style="left:1082.245px;width:39.84500000000003px;text-align:center;top:400.19999999999993px;font-size:9.8px;font-weight:bold;transform:scaleX(0.87);color:#111">59,9</div><div class="t" style="left:1122.09px;width:39.84500000000003px;text-align:center;top:400.19999999999993px;font-size:9.8px;font-weight:bold;transform:scaleX(0.87);color:#111">56,1</div><div class="t" style="left:1161.935px;width:39.84500000000003px;text-align:center;top:400.19999999999993px;font-size:9.8px;font-weight:bold;transform:scaleX(0.87);color:#111">58,5</div><div class="t" style="left:1201.78px;width:39.84500000000003px;text-align:center;top:400.19999999999993px;font-size:9.8px;font-weight:bold;transform:scaleX(0.87);color:#111">59,5</div><div class="t" style="left:1241.625px;width:39.84500000000003px;text-align:center;top:400.19999999999993px;font-size:9.8px;font-weight:bold;transform:scaleX(0.87);color:#111">59,2</div><div class="t" style="left:1281.47px;width:39.84500000000003px;text-align:center;top:400.19999999999993px;font-size:9.8px;font-weight:bold;transform:scaleX(0.87);color:#111">57,9</div><div class="t" style="left:1321.315px;width:39.8449999999998px;text-align:center;top:400.19999999999993px;font-size:9.8px;font-weight:bold;transform:scaleX(0.87);color:#111">59,2</div><div class="t" style="left:1361.1599999999999px;width:39.84500000000003px;text-align:center;top:400.19999999999993px;font-size:9.8px;font-weight:bold;transform:scaleX(0.87);color:#111">55,8</div><div class="t" style="left:1401.0049999999999px;width:39.84500000000003px;text-align:center;top:400.19999999999993px;font-size:9.8px;font-weight:bold;transform:scaleX(0.87);color:#111">53,0</div><div class="t" style="left:1440.85px;width:39.84500000000003px;text-align:center;top:400.19999999999993px;font-size:9.8px;font-weight:bold;transform:scaleX(0.87);color:#111">53,0</div><svg class="a" style="left:14px;top:411px" width="11" height="10" viewBox="0 0 11 10" shape-rendering="crispEdges"><path d="M0 1 H3 V2 H6 V1 H9 V3 H10 V9 H0Z" fill="#140c10"/><rect x="2" y="3" width="3" height="3" fill="#7A2090"/><rect x="4" y="5" width="2" height="3" fill="#60187A"/><path d="M1 7 L3 6 L5 5 L7 3" stroke="#C89A40" stroke-width="1.2" fill="none" shape-rendering="auto"/><rect x="8" y="3" width="2" height="5" fill="#9A1040"/><rect x="6" y="5" width="2" height="3" fill="#202060"/></svg><div class="t" style="left:25.5px;top:411.47999999999996px;font-size:9.8px;font-weight:bold;transform:scaleX(0.87);transform-origin:0 0;color:#111">7</div><div class="t" style="left:78.3px;width:63.39999999999999px;text-align:center;top:411.47999999999996px;font-size:9.8px;font-weight:bold;transform:scaleX(0.87);color:#111">30 ~ 90 dB</div><div class="t" style="left:141.7px;width:63.80000000000001px;text-align:center;top:411.47999999999996px;font-size:9.8px;font-weight:bold;transform:scaleX(0.87);color:#111">FLAT</div><div class="t" style="left:205.5px;width:40.0px;text-align:center;top:411.47999999999996px;font-size:9.8px;font-weight:bold;transform:scaleX(0.87);color:#111">81,7</div><div class="t" style="left:245.5px;width:39.84500000000003px;text-align:center;top:411.47999999999996px;font-size:9.8px;font-weight:bold;transform:scaleX(0.87);color:#111">71,6</div><div class="t" style="left:285.345px;width:39.84499999999997px;text-align:center;top:411.47999999999996px;font-size:9.8px;font-weight:bold;transform:scaleX(0.87);color:#111">74,6</div><div class="t" style="left:325.19px;width:39.84499999999997px;text-align:center;top:411.47999999999996px;font-size:9.8px;font-weight:bold;transform:scaleX(0.87);color:#111">70,1</div><div class="t" style="left:365.03499999999997px;width:39.84500000000003px;text-align:center;top:411.47999999999996px;font-size:9.8px;font-weight:bold;transform:scaleX(0.87);color:#111">58,8</div><div class="t" style="left:404.88px;width:39.84500000000003px;text-align:center;top:411.47999999999996px;font-size:9.8px;font-weight:bold;transform:scaleX(0.87);color:#111">68,6</div><div class="t" style="left:444.725px;width:39.84499999999997px;text-align:center;top:411.47999999999996px;font-size:9.8px;font-weight:bold;transform:scaleX(0.87);color:#111">63,3</div><div class="t" style="left:484.57px;width:39.84499999999997px;text-align:center;top:411.47999999999996px;font-size:9.8px;font-weight:bold;transform:scaleX(0.87);color:#111">71,3</div><div class="t" style="left:524.415px;width:39.84500000000003px;text-align:center;top:411.47999999999996px;font-size:9.8px;font-weight:bold;transform:scaleX(0.87);color:#111">73,2</div><div class="t" style="left:564.26px;width:39.84500000000003px;text-align:center;top:411.47999999999996px;font-size:9.8px;font-weight:bold;transform:scaleX(0.87);color:#111">68,2</div><div class="t" style="left:604.105px;width:39.84500000000003px;text-align:center;top:411.47999999999996px;font-size:9.8px;font-weight:bold;transform:scaleX(0.87);color:#111">64,7</div><div class="t" style="left:643.95px;width:39.844999999999914px;text-align:center;top:411.47999999999996px;font-size:9.8px;font-weight:bold;transform:scaleX(0.87);color:#111">64,1</div><div class="t" style="left:683.795px;width:39.84500000000003px;text-align:center;top:411.47999999999996px;font-size:9.8px;font-weight:bold;transform:scaleX(0.87);color:#111">66,1</div><div class="t" style="left:723.64px;width:39.84500000000003px;text-align:center;top:411.47999999999996px;font-size:9.8px;font-weight:bold;transform:scaleX(0.87);color:#111">63,3</div><div class="t" style="left:763.485px;width:39.844999999999914px;text-align:center;top:411.47999999999996px;font-size:9.8px;font-weight:bold;transform:scaleX(0.87);color:#111">57,9</div><div class="t" style="left:803.3299999999999px;width:39.84500000000003px;text-align:center;top:411.47999999999996px;font-size:9.8px;font-weight:bold;transform:scaleX(0.87);color:#111">60,8</div><div class="t" style="left:843.175px;width:39.84500000000003px;text-align:center;top:411.47999999999996px;font-size:9.8px;font-weight:bold;transform:scaleX(0.87);color:#111">58,7</div><div class="t" style="left:883.02px;width:39.84500000000003px;text-align:center;top:411.47999999999996px;font-size:9.8px;font-weight:bold;transform:scaleX(0.87);color:#111">60,6</div><div class="t" style="left:922.865px;width:39.84500000000003px;text-align:center;top:411.47999999999996px;font-size:9.8px;font-weight:bold;transform:scaleX(0.87);color:#111">63,4</div><div class="t" style="left:962.71px;width:39.844999999999914px;text-align:center;top:411.47999999999996px;font-size:9.8px;font-weight:bold;transform:scaleX(0.87);color:#111">62,9</div><div class="t" style="left:1002.555px;width:39.84500000000014px;text-align:center;top:411.47999999999996px;font-size:9.8px;font-weight:bold;transform:scaleX(0.87);color:#111">61,7</div><div class="t" style="left:1042.4px;width:39.8449999999998px;text-align:center;top:411.47999999999996px;font-size:9.8px;font-weight:bold;transform:scaleX(0.87);color:#111">61,6</div><div class="t" style="left:1082.245px;width:39.84500000000003px;text-align:center;top:411.47999999999996px;font-size:9.8px;font-weight:bold;transform:scaleX(0.87);color:#111">61,4</div><div class="t" style="left:1122.09px;width:39.84500000000003px;text-align:center;top:411.47999999999996px;font-size:9.8px;font-weight:bold;transform:scaleX(0.87);color:#111">58,2</div><div class="t" style="left:1161.935px;width:39.84500000000003px;text-align:center;top:411.47999999999996px;font-size:9.8px;font-weight:bold;transform:scaleX(0.87);color:#111">63,2</div><div class="t" style="left:1201.78px;width:39.84500000000003px;text-align:center;top:411.47999999999996px;font-size:9.8px;font-weight:bold;transform:scaleX(0.87);color:#111">59,0</div><div class="t" style="left:1241.625px;width:39.84500000000003px;text-align:center;top:411.47999999999996px;font-size:9.8px;font-weight:bold;transform:scaleX(0.87);color:#111">62,2</div><div class="t" style="left:1281.47px;width:39.84500000000003px;text-align:center;top:411.47999999999996px;font-size:9.8px;font-weight:bold;transform:scaleX(0.87);color:#111">60,7</div><div class="t" style="left:1321.315px;width:39.8449999999998px;text-align:center;top:411.47999999999996px;font-size:9.8px;font-weight:bold;transform:scaleX(0.87);color:#111">59,9</div><div class="t" style="left:1361.1599999999999px;width:39.84500000000003px;text-align:center;top:411.47999999999996px;font-size:9.8px;font-weight:bold;transform:scaleX(0.87);color:#111">58,2</div><div class="t" style="left:1401.0049999999999px;width:39.84500000000003px;text-align:center;top:411.47999999999996px;font-size:9.8px;font-weight:bold;transform:scaleX(0.87);color:#111">57,6</div><div class="t" style="left:1440.85px;width:39.84500000000003px;text-align:center;top:411.47999999999996px;font-size:9.8px;font-weight:bold;transform:scaleX(0.87);color:#111">54,3</div><svg class="a" style="left:14px;top:422px" width="11" height="10" viewBox="0 0 11 10" shape-rendering="crispEdges"><path d="M0 1 H3 V2 H6 V1 H9 V3 H10 V9 H0Z" fill="#140c10"/><rect x="2" y="3" width="3" height="3" fill="#7A2090"/><rect x="4" y="5" width="2" height="3" fill="#60187A"/><path d="M1 7 L3 6 L5 5 L7 3" stroke="#C89A40" stroke-width="1.2" fill="none" shape-rendering="auto"/><rect x="8" y="3" width="2" height="5" fill="#9A1040"/><rect x="6" y="5" width="2" height="3" fill="#202060"/></svg><div class="t" style="left:25.5px;top:422.75999999999993px;font-size:9.8px;font-weight:bold;transform:scaleX(0.87);transform-origin:0 0;color:#111">8</div><div class="t" style="left:78.3px;width:63.39999999999999px;text-align:center;top:422.75999999999993px;font-size:9.8px;font-weight:bold;transform:scaleX(0.87);color:#111">30 ~ 90 dB</div><div class="t" style="left:141.7px;width:63.80000000000001px;text-align:center;top:422.75999999999993px;font-size:9.8px;font-weight:bold;transform:scaleX(0.87);color:#111">FLAT</div><div class="t" style="left:205.5px;width:40.0px;text-align:center;top:422.75999999999993px;font-size:9.8px;font-weight:bold;transform:scaleX(0.87);color:#111">89,5</div><div class="t" style="left:245.5px;width:39.84500000000003px;text-align:center;top:422.75999999999993px;font-size:9.8px;font-weight:bold;transform:scaleX(0.87);color:#111">64,0</div><div class="t" style="left:285.345px;width:39.84499999999997px;text-align:center;top:422.75999999999993px;font-size:9.8px;font-weight:bold;transform:scaleX(0.87);color:#111">73,3</div><div class="t" style="left:325.19px;width:39.84499999999997px;text-align:center;top:422.75999999999993px;font-size:9.8px;font-weight:bold;transform:scaleX(0.87);color:#111">70,6</div><div class="t" style="left:365.03499999999997px;width:39.84500000000003px;text-align:center;top:422.75999999999993px;font-size:9.8px;font-weight:bold;transform:scaleX(0.87);color:#111">87,3</div><div class="t" style="left:404.88px;width:39.84500000000003px;text-align:center;top:422.75999999999993px;font-size:9.8px;font-weight:bold;transform:scaleX(0.87);color:#111">84,2</div><div class="t" style="left:444.725px;width:39.84499999999997px;text-align:center;top:422.75999999999993px;font-size:9.8px;font-weight:bold;transform:scaleX(0.87);color:#111">81,3</div><div class="t" style="left:484.57px;width:39.84499999999997px;text-align:center;top:422.75999999999993px;font-size:9.8px;font-weight:bold;transform:scaleX(0.87);color:#111">73,0</div><div class="t" style="left:524.415px;width:39.84500000000003px;text-align:center;top:422.75999999999993px;font-size:9.8px;font-weight:bold;transform:scaleX(0.87);color:#111">72,5</div><div class="t" style="left:564.26px;width:39.84500000000003px;text-align:center;top:422.75999999999993px;font-size:9.8px;font-weight:bold;transform:scaleX(0.87);color:#111">73,9</div><div class="t" style="left:604.105px;width:39.84500000000003px;text-align:center;top:422.75999999999993px;font-size:9.8px;font-weight:bold;transform:scaleX(0.87);color:#111">72,7</div><div class="t" style="left:643.95px;width:39.844999999999914px;text-align:center;top:422.75999999999993px;font-size:9.8px;font-weight:bold;transform:scaleX(0.87);color:#111">70,0</div><div class="t" style="left:683.795px;width:39.84500000000003px;text-align:center;top:422.75999999999993px;font-size:9.8px;font-weight:bold;transform:scaleX(0.87);color:#111">69,9</div><div class="t" style="left:723.64px;width:39.84500000000003px;text-align:center;top:422.75999999999993px;font-size:9.8px;font-weight:bold;transform:scaleX(0.87);color:#111">68,0</div><div class="t" style="left:763.485px;width:39.844999999999914px;text-align:center;top:422.75999999999993px;font-size:9.8px;font-weight:bold;transform:scaleX(0.87);color:#111">66,0</div><div class="t" style="left:803.3299999999999px;width:39.84500000000003px;text-align:center;top:422.75999999999993px;font-size:9.8px;font-weight:bold;transform:scaleX(0.87);color:#111">65,3</div><div class="t" style="left:843.175px;width:39.84500000000003px;text-align:center;top:422.75999999999993px;font-size:9.8px;font-weight:bold;transform:scaleX(0.87);color:#111">61,7</div><div class="t" style="left:883.02px;width:39.84500000000003px;text-align:center;top:422.75999999999993px;font-size:9.8px;font-weight:bold;transform:scaleX(0.87);color:#111">59,4</div><div class="t" style="left:922.865px;width:39.84500000000003px;text-align:center;top:422.75999999999993px;font-size:9.8px;font-weight:bold;transform:scaleX(0.87);color:#111">60,8</div><div class="t" style="left:962.71px;width:39.844999999999914px;text-align:center;top:422.75999999999993px;font-size:9.8px;font-weight:bold;transform:scaleX(0.87);color:#111">62,1</div><div class="t" style="left:1002.555px;width:39.84500000000014px;text-align:center;top:422.75999999999993px;font-size:9.8px;font-weight:bold;transform:scaleX(0.87);color:#111">65,8</div><div class="t" style="left:1042.4px;width:39.8449999999998px;text-align:center;top:422.75999999999993px;font-size:9.8px;font-weight:bold;transform:scaleX(0.87);color:#111">67,0</div><div class="t" style="left:1082.245px;width:39.84500000000003px;text-align:center;top:422.75999999999993px;font-size:9.8px;font-weight:bold;transform:scaleX(0.87);color:#111">67,1</div><div class="t" style="left:1122.09px;width:39.84500000000003px;text-align:center;top:422.75999999999993px;font-size:9.8px;font-weight:bold;transform:scaleX(0.87);color:#111">65,4</div><div class="t" style="left:1161.935px;width:39.84500000000003px;text-align:center;top:422.75999999999993px;font-size:9.8px;font-weight:bold;transform:scaleX(0.87);color:#111">66,9</div><div class="t" style="left:1201.78px;width:39.84500000000003px;text-align:center;top:422.75999999999993px;font-size:9.8px;font-weight:bold;transform:scaleX(0.87);color:#111">64,8</div><div class="t" style="left:1241.625px;width:39.84500000000003px;text-align:center;top:422.75999999999993px;font-size:9.8px;font-weight:bold;transform:scaleX(0.87);color:#111">63,0</div><div class="t" style="left:1281.47px;width:39.84500000000003px;text-align:center;top:422.75999999999993px;font-size:9.8px;font-weight:bold;transform:scaleX(0.87);color:#111">59,4</div><div class="t" style="left:1321.315px;width:39.8449999999998px;text-align:center;top:422.75999999999993px;font-size:9.8px;font-weight:bold;transform:scaleX(0.87);color:#111">65,1</div><div class="t" style="left:1361.1599999999999px;width:39.84500000000003px;text-align:center;top:422.75999999999993px;font-size:9.8px;font-weight:bold;transform:scaleX(0.87);color:#111">60,7</div><div class="t" style="left:1401.0049999999999px;width:39.84500000000003px;text-align:center;top:422.75999999999993px;font-size:9.8px;font-weight:bold;transform:scaleX(0.87);color:#111">62,9</div><div class="t" style="left:1440.85px;width:39.84500000000003px;text-align:center;top:422.75999999999993px;font-size:9.8px;font-weight:bold;transform:scaleX(0.87);color:#111">59,9</div><svg class="a" style="left:14px;top:434px" width="11" height="10" viewBox="0 0 11 10" shape-rendering="crispEdges"><path d="M0 1 H3 V2 H6 V1 H9 V3 H10 V9 H0Z" fill="#140c10"/><rect x="2" y="3" width="3" height="3" fill="#7A2090"/><rect x="4" y="5" width="2" height="3" fill="#60187A"/><path d="M1 7 L3 6 L5 5 L7 3" stroke="#C89A40" stroke-width="1.2" fill="none" shape-rendering="auto"/><rect x="8" y="3" width="2" height="5" fill="#9A1040"/><rect x="6" y="5" width="2" height="3" fill="#202060"/></svg><div class="t" style="left:25.5px;top:434.03999999999996px;font-size:9.8px;font-weight:bold;transform:scaleX(0.87);transform-origin:0 0;color:#5A0A0A">9</div><div class="t" style="left:78.3px;width:63.39999999999999px;text-align:center;top:434.03999999999996px;font-size:9.8px;font-weight:bold;transform:scaleX(0.87);color:#5A0A0A">30 ~ 90 dB</div><div class="t" style="left:141.7px;width:63.80000000000001px;text-align:center;top:434.03999999999996px;font-size:9.8px;font-weight:bold;transform:scaleX(0.87);color:#5A0A0A">FLAT</div><div class="t" style="left:205.5px;width:40.0px;text-align:center;top:434.03999999999996px;font-size:9.8px;font-weight:bold;transform:scaleX(0.87);color:#5A0A0A">79,4</div><div class="t" style="left:245.5px;width:39.84500000000003px;text-align:center;top:434.03999999999996px;font-size:9.8px;font-weight:bold;transform:scaleX(0.87);color:#5A0A0A">65,5</div><div class="t" style="left:285.345px;width:39.84499999999997px;text-align:center;top:434.03999999999996px;font-size:9.8px;font-weight:bold;transform:scaleX(0.87);color:#5A0A0A">68,2</div><div class="t" style="left:325.19px;width:39.84499999999997px;text-align:center;top:434.03999999999996px;font-size:9.8px;font-weight:bold;transform:scaleX(0.87);color:#5A0A0A">69,6</div><div class="t" style="left:365.03499999999997px;width:39.84500000000003px;text-align:center;top:434.03999999999996px;font-size:9.8px;font-weight:bold;transform:scaleX(0.87);color:#5A0A0A">71,4</div><div class="t" style="left:404.88px;width:39.84500000000003px;text-align:center;top:434.03999999999996px;font-size:9.8px;font-weight:bold;transform:scaleX(0.87);color:#5A0A0A">72,2</div><div class="t" style="left:444.725px;width:39.84499999999997px;text-align:center;top:434.03999999999996px;font-size:9.8px;font-weight:bold;transform:scaleX(0.87);color:#5A0A0A">66,5</div><div class="t" style="left:484.57px;width:39.84499999999997px;text-align:center;top:434.03999999999996px;font-size:9.8px;font-weight:bold;transform:scaleX(0.87);color:#5A0A0A">64,6</div><div class="t" style="left:524.415px;width:39.84500000000003px;text-align:center;top:434.03999999999996px;font-size:9.8px;font-weight:bold;transform:scaleX(0.87);color:#5A0A0A">63,2</div><div class="t" style="left:564.26px;width:39.84500000000003px;text-align:center;top:434.03999999999996px;font-size:9.8px;font-weight:bold;transform:scaleX(0.87);color:#5A0A0A">68,2</div><div class="t" style="left:604.105px;width:39.84500000000003px;text-align:center;top:434.03999999999996px;font-size:9.8px;font-weight:bold;transform:scaleX(0.87);color:#5A0A0A">60,1</div><div class="t" style="left:643.95px;width:39.844999999999914px;text-align:center;top:434.03999999999996px;font-size:9.8px;font-weight:bold;transform:scaleX(0.87);color:#5A0A0A">63,3</div><div class="t" style="left:683.795px;width:39.84500000000003px;text-align:center;top:434.03999999999996px;font-size:9.8px;font-weight:bold;transform:scaleX(0.87);color:#5A0A0A">61,1</div><div class="t" style="left:723.64px;width:39.84500000000003px;text-align:center;top:434.03999999999996px;font-size:9.8px;font-weight:bold;transform:scaleX(0.87);color:#5A0A0A">60,0</div><div class="t" style="left:763.485px;width:39.844999999999914px;text-align:center;top:434.03999999999996px;font-size:9.8px;font-weight:bold;transform:scaleX(0.87);color:#5A0A0A">60,2</div><div class="t" style="left:803.3299999999999px;width:39.84500000000003px;text-align:center;top:434.03999999999996px;font-size:9.8px;font-weight:bold;transform:scaleX(0.87);color:#5A0A0A">57,1</div><div class="t" style="left:843.175px;width:39.84500000000003px;text-align:center;top:434.03999999999996px;font-size:9.8px;font-weight:bold;transform:scaleX(0.87);color:#5A0A0A">56,1</div><div class="t" style="left:883.02px;width:39.84500000000003px;text-align:center;top:434.03999999999996px;font-size:9.8px;font-weight:bold;transform:scaleX(0.87);color:#5A0A0A">54,6</div><div class="t" style="left:922.865px;width:39.84500000000003px;text-align:center;top:434.03999999999996px;font-size:9.8px;font-weight:bold;transform:scaleX(0.87);color:#5A0A0A">55,9</div><div class="t" style="left:962.71px;width:39.844999999999914px;text-align:center;top:434.03999999999996px;font-size:9.8px;font-weight:bold;transform:scaleX(0.87);color:#5A0A0A">55,7</div><div class="t" style="left:1002.555px;width:39.84500000000014px;text-align:center;top:434.03999999999996px;font-size:9.8px;font-weight:bold;transform:scaleX(0.87);color:#5A0A0A">58,2</div><div class="t" style="left:1042.4px;width:39.8449999999998px;text-align:center;top:434.03999999999996px;font-size:9.8px;font-weight:bold;transform:scaleX(0.87);color:#5A0A0A">59,7</div><div class="t" style="left:1082.245px;width:39.84500000000003px;text-align:center;top:434.03999999999996px;font-size:9.8px;font-weight:bold;transform:scaleX(0.87);color:#5A0A0A">61,0</div><div class="t" style="left:1122.09px;width:39.84500000000003px;text-align:center;top:434.03999999999996px;font-size:9.8px;font-weight:bold;transform:scaleX(0.87);color:#5A0A0A">57,7</div><div class="t" style="left:1161.935px;width:39.84500000000003px;text-align:center;top:434.03999999999996px;font-size:9.8px;font-weight:bold;transform:scaleX(0.87);color:#5A0A0A">63,3</div><div class="t" style="left:1201.78px;width:39.84500000000003px;text-align:center;top:434.03999999999996px;font-size:9.8px;font-weight:bold;transform:scaleX(0.87);color:#5A0A0A">58,9</div><div class="t" style="left:1241.625px;width:39.84500000000003px;text-align:center;top:434.03999999999996px;font-size:9.8px;font-weight:bold;transform:scaleX(0.87);color:#5A0A0A">60,3</div><div class="t" style="left:1281.47px;width:39.84500000000003px;text-align:center;top:434.03999999999996px;font-size:9.8px;font-weight:bold;transform:scaleX(0.87);color:#5A0A0A">57,3</div><div class="t" style="left:1321.315px;width:39.8449999999998px;text-align:center;top:434.03999999999996px;font-size:9.8px;font-weight:bold;transform:scaleX(0.87);color:#5A0A0A">60,2</div><div class="t" style="left:1361.1599999999999px;width:39.84500000000003px;text-align:center;top:434.03999999999996px;font-size:9.8px;font-weight:bold;transform:scaleX(0.87);color:#5A0A0A">57,9</div><div class="t" style="left:1401.0049999999999px;width:39.84500000000003px;text-align:center;top:434.03999999999996px;font-size:9.8px;font-weight:bold;transform:scaleX(0.87);color:#5A0A0A">57,7</div><div class="t" style="left:1440.85px;width:39.84500000000003px;text-align:center;top:434.03999999999996px;font-size:9.8px;font-weight:bold;transform:scaleX(0.87);color:#5A0A0A">57,1</div><svg class="a" style="left:14px;top:445px" width="11" height="10" viewBox="0 0 11 10" shape-rendering="crispEdges"><path d="M0 1 H3 V2 H6 V1 H9 V3 H10 V9 H0Z" fill="#140c10"/><rect x="2" y="3" width="3" height="3" fill="#7A2090"/><rect x="4" y="5" width="2" height="3" fill="#60187A"/><path d="M1 7 L3 6 L5 5 L7 3" stroke="#C89A40" stroke-width="1.2" fill="none" shape-rendering="auto"/><rect x="8" y="3" width="2" height="5" fill="#9A1040"/><rect x="6" y="5" width="2" height="3" fill="#202060"/></svg><div class="t" style="left:25.5px;top:445.31999999999994px;font-size:9.8px;font-weight:bold;transform:scaleX(0.87);transform-origin:0 0;color:#111">10</div><div class="t" style="left:78.3px;width:63.39999999999999px;text-align:center;top:445.31999999999994px;font-size:9.8px;font-weight:bold;transform:scaleX(0.87);color:#111">30 ~ 90 dB</div><div class="t" style="left:141.7px;width:63.80000000000001px;text-align:center;top:445.31999999999994px;font-size:9.8px;font-weight:bold;transform:scaleX(0.87);color:#111">FLAT</div><div class="t" style="left:205.5px;width:40.0px;text-align:center;top:445.31999999999994px;font-size:9.8px;font-weight:bold;transform:scaleX(0.87);color:#111">81,6</div><div class="t" style="left:245.5px;width:39.84500000000003px;text-align:center;top:445.31999999999994px;font-size:9.8px;font-weight:bold;transform:scaleX(0.87);color:#111">52,1</div><div class="t" style="left:285.345px;width:39.84499999999997px;text-align:center;top:445.31999999999994px;font-size:9.8px;font-weight:bold;transform:scaleX(0.87);color:#111">64,2</div><div class="t" style="left:325.19px;width:39.84499999999997px;text-align:center;top:445.31999999999994px;font-size:9.8px;font-weight:bold;transform:scaleX(0.87);color:#111">65,7</div><div class="t" style="left:365.03499999999997px;width:39.84500000000003px;text-align:center;top:445.31999999999994px;font-size:9.8px;font-weight:bold;transform:scaleX(0.87);color:#111">66,8</div><div class="t" style="left:404.88px;width:39.84500000000003px;text-align:center;top:445.31999999999994px;font-size:9.8px;font-weight:bold;transform:scaleX(0.87);color:#111">72,9</div><div class="t" style="left:444.725px;width:39.84499999999997px;text-align:center;top:445.31999999999994px;font-size:9.8px;font-weight:bold;transform:scaleX(0.87);color:#111">64,4</div><div class="t" style="left:484.57px;width:39.84499999999997px;text-align:center;top:445.31999999999994px;font-size:9.8px;font-weight:bold;transform:scaleX(0.87);color:#111">64,6</div><div class="t" style="left:524.415px;width:39.84500000000003px;text-align:center;top:445.31999999999994px;font-size:9.8px;font-weight:bold;transform:scaleX(0.87);color:#111">67,8</div><div class="t" style="left:564.26px;width:39.84500000000003px;text-align:center;top:445.31999999999994px;font-size:9.8px;font-weight:bold;transform:scaleX(0.87);color:#111">69,6</div><div class="t" style="left:604.105px;width:39.84500000000003px;text-align:center;top:445.31999999999994px;font-size:9.8px;font-weight:bold;transform:scaleX(0.87);color:#111">69,8</div><div class="t" style="left:643.95px;width:39.844999999999914px;text-align:center;top:445.31999999999994px;font-size:9.8px;font-weight:bold;transform:scaleX(0.87);color:#111">62,5</div><div class="t" style="left:683.795px;width:39.84500000000003px;text-align:center;top:445.31999999999994px;font-size:9.8px;font-weight:bold;transform:scaleX(0.87);color:#111">65,6</div><div class="t" style="left:723.64px;width:39.84500000000003px;text-align:center;top:445.31999999999994px;font-size:9.8px;font-weight:bold;transform:scaleX(0.87);color:#111">64,2</div><div class="t" style="left:763.485px;width:39.844999999999914px;text-align:center;top:445.31999999999994px;font-size:9.8px;font-weight:bold;transform:scaleX(0.87);color:#111">60,4</div><div class="t" style="left:803.3299999999999px;width:39.84500000000003px;text-align:center;top:445.31999999999994px;font-size:9.8px;font-weight:bold;transform:scaleX(0.87);color:#111">60,5</div><div class="t" style="left:843.175px;width:39.84500000000003px;text-align:center;top:445.31999999999994px;font-size:9.8px;font-weight:bold;transform:scaleX(0.87);color:#111">60,0</div><div class="t" style="left:883.02px;width:39.84500000000003px;text-align:center;top:445.31999999999994px;font-size:9.8px;font-weight:bold;transform:scaleX(0.87);color:#111">64,6</div><div class="t" style="left:922.865px;width:39.84500000000003px;text-align:center;top:445.31999999999994px;font-size:9.8px;font-weight:bold;transform:scaleX(0.87);color:#111">64,2</div><div class="t" style="left:962.71px;width:39.844999999999914px;text-align:center;top:445.31999999999994px;font-size:9.8px;font-weight:bold;transform:scaleX(0.87);color:#111">64,9</div><div class="t" style="left:1002.555px;width:39.84500000000014px;text-align:center;top:445.31999999999994px;font-size:9.8px;font-weight:bold;transform:scaleX(0.87);color:#111">66,5</div><div class="t" style="left:1042.4px;width:39.8449999999998px;text-align:center;top:445.31999999999994px;font-size:9.8px;font-weight:bold;transform:scaleX(0.87);color:#111">68,0</div><div class="t" style="left:1082.245px;width:39.84500000000003px;text-align:center;top:445.31999999999994px;font-size:9.8px;font-weight:bold;transform:scaleX(0.87);color:#111">67,5</div><div class="t" style="left:1122.09px;width:39.84500000000003px;text-align:center;top:445.31999999999994px;font-size:9.8px;font-weight:bold;transform:scaleX(0.87);color:#111">65,6</div><div class="t" style="left:1161.935px;width:39.84500000000003px;text-align:center;top:445.31999999999994px;font-size:9.8px;font-weight:bold;transform:scaleX(0.87);color:#111">66,0</div><div class="t" style="left:1201.78px;width:39.84500000000003px;text-align:center;top:445.31999999999994px;font-size:9.8px;font-weight:bold;transform:scaleX(0.87);color:#111">66,6</div><div class="t" style="left:1241.625px;width:39.84500000000003px;text-align:center;top:445.31999999999994px;font-size:9.8px;font-weight:bold;transform:scaleX(0.87);color:#111">68,0</div><div class="t" style="left:1281.47px;width:39.84500000000003px;text-align:center;top:445.31999999999994px;font-size:9.8px;font-weight:bold;transform:scaleX(0.87);color:#111">64,0</div><div class="t" style="left:1321.315px;width:39.8449999999998px;text-align:center;top:445.31999999999994px;font-size:9.8px;font-weight:bold;transform:scaleX(0.87);color:#111">63,4</div><div class="t" style="left:1361.1599999999999px;width:39.84500000000003px;text-align:center;top:445.31999999999994px;font-size:9.8px;font-weight:bold;transform:scaleX(0.87);color:#111">63,5</div><div class="t" style="left:1401.0049999999999px;width:39.84500000000003px;text-align:center;top:445.31999999999994px;font-size:9.8px;font-weight:bold;transform:scaleX(0.87);color:#111">57,2</div><div class="t" style="left:1440.85px;width:39.84500000000003px;text-align:center;top:445.31999999999994px;font-size:9.8px;font-weight:bold;transform:scaleX(0.87);color:#111">57,2</div><svg class="a" style="left:14px;top:456px" width="11" height="10" viewBox="0 0 11 10"><rect x="0" y="0" width="1" height="9" fill="#B8B8B8"/><rect x="10" y="0" width="1" height="9" fill="#A0A0A0"/><rect x="2" y="2" width="1.6" height="7" fill="#E81010"/><rect x="4" y="0" width="1.6" height="9" fill="#1818C8"/><rect x="6" y="3" width="1.6" height="6" fill="#F018F0"/><rect x="8" y="1" width="1.6" height="8" fill="#108010"/><rect x="0" y="9" width="11" height="1" fill="#202020"/></svg><div class="t" style="left:25.5px;top:456.59999999999997px;font-size:9.8px;font-weight:bold;transform:scaleX(0.87);transform-origin:0 0;color:#111">A</div><div class="t" style="left:78.3px;width:63.39999999999999px;text-align:center;top:456.59999999999997px;font-size:9.8px;font-weight:bold;transform:scaleX(0.87);color:#111">30 ~ 90 dB</div><div class="t" style="left:141.7px;width:63.80000000000001px;text-align:center;top:456.59999999999997px;font-size:9.8px;font-weight:bold;transform:scaleX(0.87);color:#111">FLAT</div><div class="t" style="left:205.5px;width:40.0px;text-align:center;top:456.59999999999997px;font-size:9.8px;font-weight:bold;transform:scaleX(0.87);color:#111">85,0</div><div class="t" style="left:245.5px;width:39.84500000000003px;text-align:center;top:456.59999999999997px;font-size:9.8px;font-weight:bold;transform:scaleX(0.87);color:#111">85,0</div><div class="t" style="left:285.345px;width:39.84499999999997px;text-align:center;top:456.59999999999997px;font-size:9.8px;font-weight:bold;transform:scaleX(0.87);color:#111">85,0</div><div class="t" style="left:325.19px;width:39.84499999999997px;text-align:center;top:456.59999999999997px;font-size:9.8px;font-weight:bold;transform:scaleX(0.87);color:#111">85,0</div><div class="t" style="left:365.03499999999997px;width:39.84500000000003px;text-align:center;top:456.59999999999997px;font-size:9.8px;font-weight:bold;transform:scaleX(0.87);color:#111">85,0</div><div class="t" style="left:404.88px;width:39.84500000000003px;text-align:center;top:456.59999999999997px;font-size:9.8px;font-weight:bold;transform:scaleX(0.87);color:#111">85,0</div><div class="t" style="left:444.725px;width:39.84499999999997px;text-align:center;top:456.59999999999997px;font-size:9.8px;font-weight:bold;transform:scaleX(0.87);color:#111">85,0</div><div class="t" style="left:484.57px;width:39.84499999999997px;text-align:center;top:456.59999999999997px;font-size:9.8px;font-weight:bold;transform:scaleX(0.87);color:#111">85,0</div><div class="t" style="left:524.415px;width:39.84500000000003px;text-align:center;top:456.59999999999997px;font-size:9.8px;font-weight:bold;transform:scaleX(0.87);color:#111">85,0</div><div class="t" style="left:564.26px;width:39.84500000000003px;text-align:center;top:456.59999999999997px;font-size:9.8px;font-weight:bold;transform:scaleX(0.87);color:#111">85,0</div><div class="t" style="left:604.105px;width:39.84500000000003px;text-align:center;top:456.59999999999997px;font-size:9.8px;font-weight:bold;transform:scaleX(0.87);color:#111">85,0</div><div class="t" style="left:643.95px;width:39.844999999999914px;text-align:center;top:456.59999999999997px;font-size:9.8px;font-weight:bold;transform:scaleX(0.87);color:#111">85,0</div><div class="t" style="left:683.795px;width:39.84500000000003px;text-align:center;top:456.59999999999997px;font-size:9.8px;font-weight:bold;transform:scaleX(0.87);color:#111">85,0</div><div class="t" style="left:723.64px;width:39.84500000000003px;text-align:center;top:456.59999999999997px;font-size:9.8px;font-weight:bold;transform:scaleX(0.87);color:#111">85,0</div><div class="t" style="left:763.485px;width:39.844999999999914px;text-align:center;top:456.59999999999997px;font-size:9.8px;font-weight:bold;transform:scaleX(0.87);color:#111">85,0</div><div class="t" style="left:803.3299999999999px;width:39.84500000000003px;text-align:center;top:456.59999999999997px;font-size:9.8px;font-weight:bold;transform:scaleX(0.87);color:#111">85,0</div><div class="t" style="left:843.175px;width:39.84500000000003px;text-align:center;top:456.59999999999997px;font-size:9.8px;font-weight:bold;transform:scaleX(0.87);color:#111">85,0</div><div class="t" style="left:883.02px;width:39.84500000000003px;text-align:center;top:456.59999999999997px;font-size:9.8px;font-weight:bold;transform:scaleX(0.87);color:#111">85,0</div><div class="t" style="left:922.865px;width:39.84500000000003px;text-align:center;top:456.59999999999997px;font-size:9.8px;font-weight:bold;transform:scaleX(0.87);color:#111">85,0</div><div class="t" style="left:962.71px;width:39.844999999999914px;text-align:center;top:456.59999999999997px;font-size:9.8px;font-weight:bold;transform:scaleX(0.87);color:#111">85,0</div><div class="t" style="left:1002.555px;width:39.84500000000014px;text-align:center;top:456.59999999999997px;font-size:9.8px;font-weight:bold;transform:scaleX(0.87);color:#111">85,0</div><div class="t" style="left:1042.4px;width:39.8449999999998px;text-align:center;top:456.59999999999997px;font-size:9.8px;font-weight:bold;transform:scaleX(0.87);color:#111">85,0</div><div class="t" style="left:1082.245px;width:39.84500000000003px;text-align:center;top:456.59999999999997px;font-size:9.8px;font-weight:bold;transform:scaleX(0.87);color:#111">85,0</div><div class="t" style="left:1122.09px;width:39.84500000000003px;text-align:center;top:456.59999999999997px;font-size:9.8px;font-weight:bold;transform:scaleX(0.87);color:#111">85,0</div><div class="t" style="left:1161.935px;width:39.84500000000003px;text-align:center;top:456.59999999999997px;font-size:9.8px;font-weight:bold;transform:scaleX(0.87);color:#111">85,0</div><div class="t" style="left:1201.78px;width:39.84500000000003px;text-align:center;top:456.59999999999997px;font-size:9.8px;font-weight:bold;transform:scaleX(0.87);color:#111">85,0</div><div class="t" style="left:1241.625px;width:39.84500000000003px;text-align:center;top:456.59999999999997px;font-size:9.8px;font-weight:bold;transform:scaleX(0.87);color:#111">85,0</div><div class="t" style="left:1281.47px;width:39.84500000000003px;text-align:center;top:456.59999999999997px;font-size:9.8px;font-weight:bold;transform:scaleX(0.87);color:#111">85,0</div><div class="t" style="left:1321.315px;width:39.8449999999998px;text-align:center;top:456.59999999999997px;font-size:9.8px;font-weight:bold;transform:scaleX(0.87);color:#111">85,0</div><div class="t" style="left:1361.1599999999999px;width:39.84500000000003px;text-align:center;top:456.59999999999997px;font-size:9.8px;font-weight:bold;transform:scaleX(0.87);color:#111">85,0</div><div class="t" style="left:1401.0049999999999px;width:39.84500000000003px;text-align:center;top:456.59999999999997px;font-size:9.8px;font-weight:bold;transform:scaleX(0.87);color:#111">85,0</div><div class="t" style="left:1440.85px;width:39.84500000000003px;text-align:center;top:456.59999999999997px;font-size:9.8px;font-weight:bold;transform:scaleX(0.87);color:#111">85,0</div><svg class="a" style="left:14px;top:467px" width="11" height="10" viewBox="0 0 11 10"><rect x="0" y="0" width="1" height="9" fill="#B8B8B8"/><rect x="10" y="0" width="1" height="9" fill="#A0A0A0"/><rect x="2" y="2" width="1.6" height="7" fill="#E81010"/><rect x="4" y="0" width="1.6" height="9" fill="#1818C8"/><rect x="6" y="3" width="1.6" height="6" fill="#F018F0"/><rect x="8" y="1" width="1.6" height="8" fill="#108010"/><rect x="0" y="9" width="11" height="1" fill="#202020"/></svg><div class="t" style="left:25.5px;top:467.87999999999994px;font-size:9.8px;font-weight:bold;transform:scaleX(0.87);transform-origin:0 0;color:#111">B</div><div class="t" style="left:78.3px;width:63.39999999999999px;text-align:center;top:467.87999999999994px;font-size:9.8px;font-weight:bold;transform:scaleX(0.87);color:#111">30 ~ 90 dB</div><div class="t" style="left:141.7px;width:63.80000000000001px;text-align:center;top:467.87999999999994px;font-size:9.8px;font-weight:bold;transform:scaleX(0.87);color:#111">FLAT</div><div class="t" style="left:205.5px;width:40.0px;text-align:center;top:467.87999999999994px;font-size:9.8px;font-weight:bold;transform:scaleX(0.87);color:#111">85,0</div><div class="t" style="left:245.5px;width:39.84500000000003px;text-align:center;top:467.87999999999994px;font-size:9.8px;font-weight:bold;transform:scaleX(0.87);color:#111">85,0</div><div class="t" style="left:285.345px;width:39.84499999999997px;text-align:center;top:467.87999999999994px;font-size:9.8px;font-weight:bold;transform:scaleX(0.87);color:#111">85,0</div><div class="t" style="left:325.19px;width:39.84499999999997px;text-align:center;top:467.87999999999994px;font-size:9.8px;font-weight:bold;transform:scaleX(0.87);color:#111">85,0</div><div class="t" style="left:365.03499999999997px;width:39.84500000000003px;text-align:center;top:467.87999999999994px;font-size:9.8px;font-weight:bold;transform:scaleX(0.87);color:#111">85,0</div><div class="t" style="left:404.88px;width:39.84500000000003px;text-align:center;top:467.87999999999994px;font-size:9.8px;font-weight:bold;transform:scaleX(0.87);color:#111">85,0</div><div class="t" style="left:444.725px;width:39.84499999999997px;text-align:center;top:467.87999999999994px;font-size:9.8px;font-weight:bold;transform:scaleX(0.87);color:#111">85,0</div><div class="t" style="left:484.57px;width:39.84499999999997px;text-align:center;top:467.87999999999994px;font-size:9.8px;font-weight:bold;transform:scaleX(0.87);color:#111">85,0</div><div class="t" style="left:524.415px;width:39.84500000000003px;text-align:center;top:467.87999999999994px;font-size:9.8px;font-weight:bold;transform:scaleX(0.87);color:#111">85,0</div><div class="t" style="left:564.26px;width:39.84500000000003px;text-align:center;top:467.87999999999994px;font-size:9.8px;font-weight:bold;transform:scaleX(0.87);color:#111">85,0</div><div class="t" style="left:604.105px;width:39.84500000000003px;text-align:center;top:467.87999999999994px;font-size:9.8px;font-weight:bold;transform:scaleX(0.87);color:#111">85,0</div><div class="t" style="left:643.95px;width:39.844999999999914px;text-align:center;top:467.87999999999994px;font-size:9.8px;font-weight:bold;transform:scaleX(0.87);color:#111">85,0</div><div class="t" style="left:683.795px;width:39.84500000000003px;text-align:center;top:467.87999999999994px;font-size:9.8px;font-weight:bold;transform:scaleX(0.87);color:#111">85,0</div><div class="t" style="left:723.64px;width:39.84500000000003px;text-align:center;top:467.87999999999994px;font-size:9.8px;font-weight:bold;transform:scaleX(0.87);color:#111">85,0</div><div class="t" style="left:763.485px;width:39.844999999999914px;text-align:center;top:467.87999999999994px;font-size:9.8px;font-weight:bold;transform:scaleX(0.87);color:#111">85,0</div><div class="t" style="left:803.3299999999999px;width:39.84500000000003px;text-align:center;top:467.87999999999994px;font-size:9.8px;font-weight:bold;transform:scaleX(0.87);color:#111">85,0</div><div class="t" style="left:843.175px;width:39.84500000000003px;text-align:center;top:467.87999999999994px;font-size:9.8px;font-weight:bold;transform:scaleX(0.87);color:#111">85,0</div><div class="t" style="left:883.02px;width:39.84500000000003px;text-align:center;top:467.87999999999994px;font-size:9.8px;font-weight:bold;transform:scaleX(0.87);color:#111">85,0</div><div class="t" style="left:922.865px;width:39.84500000000003px;text-align:center;top:467.87999999999994px;font-size:9.8px;font-weight:bold;transform:scaleX(0.87);color:#111">85,0</div><div class="t" style="left:962.71px;width:39.844999999999914px;text-align:center;top:467.87999999999994px;font-size:9.8px;font-weight:bold;transform:scaleX(0.87);color:#111">85,0</div><div class="t" style="left:1002.555px;width:39.84500000000014px;text-align:center;top:467.87999999999994px;font-size:9.8px;font-weight:bold;transform:scaleX(0.87);color:#111">85,0</div><div class="t" style="left:1042.4px;width:39.8449999999998px;text-align:center;top:467.87999999999994px;font-size:9.8px;font-weight:bold;transform:scaleX(0.87);color:#111">85,0</div><div class="t" style="left:1082.245px;width:39.84500000000003px;text-align:center;top:467.87999999999994px;font-size:9.8px;font-weight:bold;transform:scaleX(0.87);color:#111">85,0</div><div class="t" style="left:1122.09px;width:39.84500000000003px;text-align:center;top:467.87999999999994px;font-size:9.8px;font-weight:bold;transform:scaleX(0.87);color:#111">85,0</div><div class="t" style="left:1161.935px;width:39.84500000000003px;text-align:center;top:467.87999999999994px;font-size:9.8px;font-weight:bold;transform:scaleX(0.87);color:#111">85,0</div><div class="t" style="left:1201.78px;width:39.84500000000003px;text-align:center;top:467.87999999999994px;font-size:9.8px;font-weight:bold;transform:scaleX(0.87);color:#111">85,0</div><div class="t" style="left:1241.625px;width:39.84500000000003px;text-align:center;top:467.87999999999994px;font-size:9.8px;font-weight:bold;transform:scaleX(0.87);color:#111">85,0</div><div class="t" style="left:1281.47px;width:39.84500000000003px;text-align:center;top:467.87999999999994px;font-size:9.8px;font-weight:bold;transform:scaleX(0.87);color:#111">85,0</div><div class="t" style="left:1321.315px;width:39.8449999999998px;text-align:center;top:467.87999999999994px;font-size:9.8px;font-weight:bold;transform:scaleX(0.87);color:#111">85,0</div><div class="t" style="left:1361.1599999999999px;width:39.84500000000003px;text-align:center;top:467.87999999999994px;font-size:9.8px;font-weight:bold;transform:scaleX(0.87);color:#111">85,0</div><div class="t" style="left:1401.0049999999999px;width:39.84500000000003px;text-align:center;top:467.87999999999994px;font-size:9.8px;font-weight:bold;transform:scaleX(0.87);color:#111">85,0</div><div class="t" style="left:1440.85px;width:39.84500000000003px;text-align:center;top:467.87999999999994px;font-size:9.8px;font-weight:bold;transform:scaleX(0.87);color:#111">85,0</div><svg class="a" style="left:14px;top:479px" width="11" height="10" viewBox="0 0 11 10"><rect x="0" y="0" width="1" height="9" fill="#B8B8B8"/><rect x="10" y="0" width="1" height="9" fill="#A0A0A0"/><rect x="2" y="2" width="1.6" height="7" fill="#E81010"/><rect x="4" y="0" width="1.6" height="9" fill="#1818C8"/><rect x="6" y="3" width="1.6" height="6" fill="#F018F0"/><rect x="8" y="1" width="1.6" height="8" fill="#108010"/><rect x="0" y="9" width="11" height="1" fill="#202020"/></svg><div class="t" style="left:25.5px;top:479.15999999999997px;font-size:9.8px;font-weight:bold;transform:scaleX(0.87);transform-origin:0 0;color:#111">C</div><div class="t" style="left:78.3px;width:63.39999999999999px;text-align:center;top:479.15999999999997px;font-size:9.8px;font-weight:bold;transform:scaleX(0.87);color:#111">30 ~ 90 dB</div><div class="t" style="left:141.7px;width:63.80000000000001px;text-align:center;top:479.15999999999997px;font-size:9.8px;font-weight:bold;transform:scaleX(0.87);color:#111">FLAT</div><div class="t" style="left:205.5px;width:40.0px;text-align:center;top:479.15999999999997px;font-size:9.8px;font-weight:bold;transform:scaleX(0.87);color:#111">85,0</div><div class="t" style="left:245.5px;width:39.84500000000003px;text-align:center;top:479.15999999999997px;font-size:9.8px;font-weight:bold;transform:scaleX(0.87);color:#111">85,0</div><div class="t" style="left:285.345px;width:39.84499999999997px;text-align:center;top:479.15999999999997px;font-size:9.8px;font-weight:bold;transform:scaleX(0.87);color:#111">85,0</div><div class="t" style="left:325.19px;width:39.84499999999997px;text-align:center;top:479.15999999999997px;font-size:9.8px;font-weight:bold;transform:scaleX(0.87);color:#111">85,0</div><div class="t" style="left:365.03499999999997px;width:39.84500000000003px;text-align:center;top:479.15999999999997px;font-size:9.8px;font-weight:bold;transform:scaleX(0.87);color:#111">85,0</div><div class="t" style="left:404.88px;width:39.84500000000003px;text-align:center;top:479.15999999999997px;font-size:9.8px;font-weight:bold;transform:scaleX(0.87);color:#111">85,0</div><div class="t" style="left:444.725px;width:39.84499999999997px;text-align:center;top:479.15999999999997px;font-size:9.8px;font-weight:bold;transform:scaleX(0.87);color:#111">85,0</div><div class="t" style="left:484.57px;width:39.84499999999997px;text-align:center;top:479.15999999999997px;font-size:9.8px;font-weight:bold;transform:scaleX(0.87);color:#111">85,0</div><div class="t" style="left:524.415px;width:39.84500000000003px;text-align:center;top:479.15999999999997px;font-size:9.8px;font-weight:bold;transform:scaleX(0.87);color:#111">85,0</div><div class="t" style="left:564.26px;width:39.84500000000003px;text-align:center;top:479.15999999999997px;font-size:9.8px;font-weight:bold;transform:scaleX(0.87);color:#111">85,0</div><div class="t" style="left:604.105px;width:39.84500000000003px;text-align:center;top:479.15999999999997px;font-size:9.8px;font-weight:bold;transform:scaleX(0.87);color:#111">85,0</div><div class="t" style="left:643.95px;width:39.844999999999914px;text-align:center;top:479.15999999999997px;font-size:9.8px;font-weight:bold;transform:scaleX(0.87);color:#111">85,0</div><div class="t" style="left:683.795px;width:39.84500000000003px;text-align:center;top:479.15999999999997px;font-size:9.8px;font-weight:bold;transform:scaleX(0.87);color:#111">85,0</div><div class="t" style="left:723.64px;width:39.84500000000003px;text-align:center;top:479.15999999999997px;font-size:9.8px;font-weight:bold;transform:scaleX(0.87);color:#111">85,0</div><div class="t" style="left:763.485px;width:39.844999999999914px;text-align:center;top:479.15999999999997px;font-size:9.8px;font-weight:bold;transform:scaleX(0.87);color:#111">85,0</div><div class="t" style="left:803.3299999999999px;width:39.84500000000003px;text-align:center;top:479.15999999999997px;font-size:9.8px;font-weight:bold;transform:scaleX(0.87);color:#111">85,0</div><div class="t" style="left:843.175px;width:39.84500000000003px;text-align:center;top:479.15999999999997px;font-size:9.8px;font-weight:bold;transform:scaleX(0.87);color:#111">85,0</div><div class="t" style="left:883.02px;width:39.84500000000003px;text-align:center;top:479.15999999999997px;font-size:9.8px;font-weight:bold;transform:scaleX(0.87);color:#111">85,0</div><div class="t" style="left:922.865px;width:39.84500000000003px;text-align:center;top:479.15999999999997px;font-size:9.8px;font-weight:bold;transform:scaleX(0.87);color:#111">85,0</div><div class="t" style="left:962.71px;width:39.844999999999914px;text-align:center;top:479.15999999999997px;font-size:9.8px;font-weight:bold;transform:scaleX(0.87);color:#111">85,0</div><div class="t" style="left:1002.555px;width:39.84500000000014px;text-align:center;top:479.15999999999997px;font-size:9.8px;font-weight:bold;transform:scaleX(0.87);color:#111">85,0</div><div class="t" style="left:1042.4px;width:39.8449999999998px;text-align:center;top:479.15999999999997px;font-size:9.8px;font-weight:bold;transform:scaleX(0.87);color:#111">85,0</div><div class="t" style="left:1082.245px;width:39.84500000000003px;text-align:center;top:479.15999999999997px;font-size:9.8px;font-weight:bold;transform:scaleX(0.87);color:#111">85,0</div><div class="t" style="left:1122.09px;width:39.84500000000003px;text-align:center;top:479.15999999999997px;font-size:9.8px;font-weight:bold;transform:scaleX(0.87);color:#111">85,0</div><div class="t" style="left:1161.935px;width:39.84500000000003px;text-align:center;top:479.15999999999997px;font-size:9.8px;font-weight:bold;transform:scaleX(0.87);color:#111">85,0</div><div class="t" style="left:1201.78px;width:39.84500000000003px;text-align:center;top:479.15999999999997px;font-size:9.8px;font-weight:bold;transform:scaleX(0.87);color:#111">85,0</div><div class="t" style="left:1241.625px;width:39.84500000000003px;text-align:center;top:479.15999999999997px;font-size:9.8px;font-weight:bold;transform:scaleX(0.87);color:#111">85,0</div><div class="t" style="left:1281.47px;width:39.84500000000003px;text-align:center;top:479.15999999999997px;font-size:9.8px;font-weight:bold;transform:scaleX(0.87);color:#111">85,0</div><div class="t" style="left:1321.315px;width:39.8449999999998px;text-align:center;top:479.15999999999997px;font-size:9.8px;font-weight:bold;transform:scaleX(0.87);color:#111">85,0</div><div class="t" style="left:1361.1599999999999px;width:39.84500000000003px;text-align:center;top:479.15999999999997px;font-size:9.8px;font-weight:bold;transform:scaleX(0.87);color:#111">85,0</div><div class="t" style="left:1401.0049999999999px;width:39.84500000000003px;text-align:center;top:479.15999999999997px;font-size:9.8px;font-weight:bold;transform:scaleX(0.87);color:#111">85,0</div><div class="t" style="left:1440.85px;width:39.84500000000003px;text-align:center;top:479.15999999999997px;font-size:9.8px;font-weight:bold;transform:scaleX(0.87);color:#111">85,0</div><svg class="a" style="left:14px;top:490px" width="11" height="10" viewBox="0 0 11 10"><rect x="0" y="0" width="1" height="9" fill="#B8B8B8"/><rect x="10" y="0" width="1" height="9" fill="#A0A0A0"/><rect x="2" y="2" width="1.6" height="7" fill="#E81010"/><rect x="4" y="0" width="1.6" height="9" fill="#1818C8"/><rect x="6" y="3" width="1.6" height="6" fill="#F018F0"/><rect x="8" y="1" width="1.6" height="8" fill="#108010"/><rect x="0" y="9" width="11" height="1" fill="#202020"/></svg><div class="t" style="left:25.5px;top:490.43999999999994px;font-size:9.8px;font-weight:bold;transform:scaleX(0.87);transform-origin:0 0;color:#111">D</div><div class="t" style="left:78.3px;width:63.39999999999999px;text-align:center;top:490.43999999999994px;font-size:9.8px;font-weight:bold;transform:scaleX(0.87);color:#111">30 ~ 90 dB</div><div class="t" style="left:141.7px;width:63.80000000000001px;text-align:center;top:490.43999999999994px;font-size:9.8px;font-weight:bold;transform:scaleX(0.87);color:#111">FLAT</div><div class="t" style="left:205.5px;width:40.0px;text-align:center;top:490.43999999999994px;font-size:9.8px;font-weight:bold;transform:scaleX(0.87);color:#111">85,0</div><div class="t" style="left:245.5px;width:39.84500000000003px;text-align:center;top:490.43999999999994px;font-size:9.8px;font-weight:bold;transform:scaleX(0.87);color:#111">85,0</div><div class="t" style="left:285.345px;width:39.84499999999997px;text-align:center;top:490.43999999999994px;font-size:9.8px;font-weight:bold;transform:scaleX(0.87);color:#111">85,0</div><div class="t" style="left:325.19px;width:39.84499999999997px;text-align:center;top:490.43999999999994px;font-size:9.8px;font-weight:bold;transform:scaleX(0.87);color:#111">85,0</div><div class="t" style="left:365.03499999999997px;width:39.84500000000003px;text-align:center;top:490.43999999999994px;font-size:9.8px;font-weight:bold;transform:scaleX(0.87);color:#111">85,0</div><div class="t" style="left:404.88px;width:39.84500000000003px;text-align:center;top:490.43999999999994px;font-size:9.8px;font-weight:bold;transform:scaleX(0.87);color:#111">85,0</div><div class="t" style="left:444.725px;width:39.84499999999997px;text-align:center;top:490.43999999999994px;font-size:9.8px;font-weight:bold;transform:scaleX(0.87);color:#111">85,0</div><div class="t" style="left:484.57px;width:39.84499999999997px;text-align:center;top:490.43999999999994px;font-size:9.8px;font-weight:bold;transform:scaleX(0.87);color:#111">85,0</div><div class="t" style="left:524.415px;width:39.84500000000003px;text-align:center;top:490.43999999999994px;font-size:9.8px;font-weight:bold;transform:scaleX(0.87);color:#111">85,0</div><div class="t" style="left:564.26px;width:39.84500000000003px;text-align:center;top:490.43999999999994px;font-size:9.8px;font-weight:bold;transform:scaleX(0.87);color:#111">85,0</div><div class="t" style="left:604.105px;width:39.84500000000003px;text-align:center;top:490.43999999999994px;font-size:9.8px;font-weight:bold;transform:scaleX(0.87);color:#111">85,0</div><div class="t" style="left:643.95px;width:39.844999999999914px;text-align:center;top:490.43999999999994px;font-size:9.8px;font-weight:bold;transform:scaleX(0.87);color:#111">85,0</div><div class="t" style="left:683.795px;width:39.84500000000003px;text-align:center;top:490.43999999999994px;font-size:9.8px;font-weight:bold;transform:scaleX(0.87);color:#111">85,0</div><div class="t" style="left:723.64px;width:39.84500000000003px;text-align:center;top:490.43999999999994px;font-size:9.8px;font-weight:bold;transform:scaleX(0.87);color:#111">85,0</div><div class="t" style="left:763.485px;width:39.844999999999914px;text-align:center;top:490.43999999999994px;font-size:9.8px;font-weight:bold;transform:scaleX(0.87);color:#111">85,0</div><div class="t" style="left:803.3299999999999px;width:39.84500000000003px;text-align:center;top:490.43999999999994px;font-size:9.8px;font-weight:bold;transform:scaleX(0.87);color:#111">85,0</div><div class="t" style="left:843.175px;width:39.84500000000003px;text-align:center;top:490.43999999999994px;font-size:9.8px;font-weight:bold;transform:scaleX(0.87);color:#111">85,0</div><div class="t" style="left:883.02px;width:39.84500000000003px;text-align:center;top:490.43999999999994px;font-size:9.8px;font-weight:bold;transform:scaleX(0.87);color:#111">85,0</div><div class="t" style="left:922.865px;width:39.84500000000003px;text-align:center;top:490.43999999999994px;font-size:9.8px;font-weight:bold;transform:scaleX(0.87);color:#111">85,0</div><div class="t" style="left:962.71px;width:39.844999999999914px;text-align:center;top:490.43999999999994px;font-size:9.8px;font-weight:bold;transform:scaleX(0.87);color:#111">85,0</div><div class="t" style="left:1002.555px;width:39.84500000000014px;text-align:center;top:490.43999999999994px;font-size:9.8px;font-weight:bold;transform:scaleX(0.87);color:#111">85,0</div><div class="t" style="left:1042.4px;width:39.8449999999998px;text-align:center;top:490.43999999999994px;font-size:9.8px;font-weight:bold;transform:scaleX(0.87);color:#111">85,0</div><div class="t" style="left:1082.245px;width:39.84500000000003px;text-align:center;top:490.43999999999994px;font-size:9.8px;font-weight:bold;transform:scaleX(0.87);color:#111">85,0</div><div class="t" style="left:1122.09px;width:39.84500000000003px;text-align:center;top:490.43999999999994px;font-size:9.8px;font-weight:bold;transform:scaleX(0.87);color:#111">85,0</div><div class="t" style="left:1161.935px;width:39.84500000000003px;text-align:center;top:490.43999999999994px;font-size:9.8px;font-weight:bold;transform:scaleX(0.87);color:#111">85,0</div><div class="t" style="left:1201.78px;width:39.84500000000003px;text-align:center;top:490.43999999999994px;font-size:9.8px;font-weight:bold;transform:scaleX(0.87);color:#111">85,0</div><div class="t" style="left:1241.625px;width:39.84500000000003px;text-align:center;top:490.43999999999994px;font-size:9.8px;font-weight:bold;transform:scaleX(0.87);color:#111">85,0</div><div class="t" style="left:1281.47px;width:39.84500000000003px;text-align:center;top:490.43999999999994px;font-size:9.8px;font-weight:bold;transform:scaleX(0.87);color:#111">85,0</div><div class="t" style="left:1321.315px;width:39.8449999999998px;text-align:center;top:490.43999999999994px;font-size:9.8px;font-weight:bold;transform:scaleX(0.87);color:#111">85,0</div><div class="t" style="left:1361.1599999999999px;width:39.84500000000003px;text-align:center;top:490.43999999999994px;font-size:9.8px;font-weight:bold;transform:scaleX(0.87);color:#111">85,0</div><div class="t" style="left:1401.0049999999999px;width:39.84500000000003px;text-align:center;top:490.43999999999994px;font-size:9.8px;font-weight:bold;transform:scaleX(0.87);color:#111">85,0</div><div class="t" style="left:1440.85px;width:39.84500000000003px;text-align:center;top:490.43999999999994px;font-size:9.8px;font-weight:bold;transform:scaleX(0.87);color:#111">85,0</div><svg class="a" style="left:14px;top:501px" width="11" height="10" viewBox="0 0 11 10"><rect x="0" y="0" width="1" height="9" fill="#B8B8B8"/><rect x="10" y="0" width="1" height="9" fill="#A0A0A0"/><rect x="2" y="2" width="1.6" height="7" fill="#E81010"/><rect x="4" y="0" width="1.6" height="9" fill="#1818C8"/><rect x="6" y="3" width="1.6" height="6" fill="#F018F0"/><rect x="8" y="1" width="1.6" height="8" fill="#108010"/><rect x="0" y="9" width="11" height="1" fill="#202020"/></svg><div class="t" style="left:25.5px;top:501.7199999999999px;font-size:9.8px;font-weight:bold;transform:scaleX(0.87);transform-origin:0 0;color:#111">E</div><div class="t" style="left:78.3px;width:63.39999999999999px;text-align:center;top:501.7199999999999px;font-size:9.8px;font-weight:bold;transform:scaleX(0.87);color:#111">30 ~ 90 dB</div><div class="t" style="left:141.7px;width:63.80000000000001px;text-align:center;top:501.7199999999999px;font-size:9.8px;font-weight:bold;transform:scaleX(0.87);color:#111">FLAT</div><div class="t" style="left:205.5px;width:40.0px;text-align:center;top:501.7199999999999px;font-size:9.8px;font-weight:bold;transform:scaleX(0.87);color:#111">85,0</div><div class="t" style="left:245.5px;width:39.84500000000003px;text-align:center;top:501.7199999999999px;font-size:9.8px;font-weight:bold;transform:scaleX(0.87);color:#111">85,0</div><div class="t" style="left:285.345px;width:39.84499999999997px;text-align:center;top:501.7199999999999px;font-size:9.8px;font-weight:bold;transform:scaleX(0.87);color:#111">85,0</div><div class="t" style="left:325.19px;width:39.84499999999997px;text-align:center;top:501.7199999999999px;font-size:9.8px;font-weight:bold;transform:scaleX(0.87);color:#111">85,0</div><div class="t" style="left:365.03499999999997px;width:39.84500000000003px;text-align:center;top:501.7199999999999px;font-size:9.8px;font-weight:bold;transform:scaleX(0.87);color:#111">85,0</div><div class="t" style="left:404.88px;width:39.84500000000003px;text-align:center;top:501.7199999999999px;font-size:9.8px;font-weight:bold;transform:scaleX(0.87);color:#111">85,0</div><div class="t" style="left:444.725px;width:39.84499999999997px;text-align:center;top:501.7199999999999px;font-size:9.8px;font-weight:bold;transform:scaleX(0.87);color:#111">85,0</div><div class="t" style="left:484.57px;width:39.84499999999997px;text-align:center;top:501.7199999999999px;font-size:9.8px;font-weight:bold;transform:scaleX(0.87);color:#111">85,0</div><div class="t" style="left:524.415px;width:39.84500000000003px;text-align:center;top:501.7199999999999px;font-size:9.8px;font-weight:bold;transform:scaleX(0.87);color:#111">85,0</div><div class="t" style="left:564.26px;width:39.84500000000003px;text-align:center;top:501.7199999999999px;font-size:9.8px;font-weight:bold;transform:scaleX(0.87);color:#111">85,0</div><div class="t" style="left:604.105px;width:39.84500000000003px;text-align:center;top:501.7199999999999px;font-size:9.8px;font-weight:bold;transform:scaleX(0.87);color:#111">85,0</div><div class="t" style="left:643.95px;width:39.844999999999914px;text-align:center;top:501.7199999999999px;font-size:9.8px;font-weight:bold;transform:scaleX(0.87);color:#111">85,0</div><div class="t" style="left:683.795px;width:39.84500000000003px;text-align:center;top:501.7199999999999px;font-size:9.8px;font-weight:bold;transform:scaleX(0.87);color:#111">85,0</div><div class="t" style="left:723.64px;width:39.84500000000003px;text-align:center;top:501.7199999999999px;font-size:9.8px;font-weight:bold;transform:scaleX(0.87);color:#111">85,0</div><div class="t" style="left:763.485px;width:39.844999999999914px;text-align:center;top:501.7199999999999px;font-size:9.8px;font-weight:bold;transform:scaleX(0.87);color:#111">85,0</div><div class="t" style="left:803.3299999999999px;width:39.84500000000003px;text-align:center;top:501.7199999999999px;font-size:9.8px;font-weight:bold;transform:scaleX(0.87);color:#111">85,0</div><div class="t" style="left:843.175px;width:39.84500000000003px;text-align:center;top:501.7199999999999px;font-size:9.8px;font-weight:bold;transform:scaleX(0.87);color:#111">85,0</div><div class="t" style="left:883.02px;width:39.84500000000003px;text-align:center;top:501.7199999999999px;font-size:9.8px;font-weight:bold;transform:scaleX(0.87);color:#111">85,0</div><div class="t" style="left:922.865px;width:39.84500000000003px;text-align:center;top:501.7199999999999px;font-size:9.8px;font-weight:bold;transform:scaleX(0.87);color:#111">85,0</div><div class="t" style="left:962.71px;width:39.844999999999914px;text-align:center;top:501.7199999999999px;font-size:9.8px;font-weight:bold;transform:scaleX(0.87);color:#111">85,0</div><div class="t" style="left:1002.555px;width:39.84500000000014px;text-align:center;top:501.7199999999999px;font-size:9.8px;font-weight:bold;transform:scaleX(0.87);color:#111">85,0</div><div class="t" style="left:1042.4px;width:39.8449999999998px;text-align:center;top:501.7199999999999px;font-size:9.8px;font-weight:bold;transform:scaleX(0.87);color:#111">85,0</div><div class="t" style="left:1082.245px;width:39.84500000000003px;text-align:center;top:501.7199999999999px;font-size:9.8px;font-weight:bold;transform:scaleX(0.87);color:#111">85,0</div><div class="t" style="left:1122.09px;width:39.84500000000003px;text-align:center;top:501.7199999999999px;font-size:9.8px;font-weight:bold;transform:scaleX(0.87);color:#111">85,0</div><div class="t" style="left:1161.935px;width:39.84500000000003px;text-align:center;top:501.7199999999999px;font-size:9.8px;font-weight:bold;transform:scaleX(0.87);color:#111">85,0</div><div class="t" style="left:1201.78px;width:39.84500000000003px;text-align:center;top:501.7199999999999px;font-size:9.8px;font-weight:bold;transform:scaleX(0.87);color:#111">85,0</div><div class="t" style="left:1241.625px;width:39.84500000000003px;text-align:center;top:501.7199999999999px;font-size:9.8px;font-weight:bold;transform:scaleX(0.87);color:#111">85,0</div><div class="t" style="left:1281.47px;width:39.84500000000003px;text-align:center;top:501.7199999999999px;font-size:9.8px;font-weight:bold;transform:scaleX(0.87);color:#111">85,0</div><div class="t" style="left:1321.315px;width:39.8449999999998px;text-align:center;top:501.7199999999999px;font-size:9.8px;font-weight:bold;transform:scaleX(0.87);color:#111">85,0</div><div class="t" style="left:1361.1599999999999px;width:39.84500000000003px;text-align:center;top:501.7199999999999px;font-size:9.8px;font-weight:bold;transform:scaleX(0.87);color:#111">85,0</div><div class="t" style="left:1401.0049999999999px;width:39.84500000000003px;text-align:center;top:501.7199999999999px;font-size:9.8px;font-weight:bold;transform:scaleX(0.87);color:#111">85,0</div><div class="t" style="left:1440.85px;width:39.84500000000003px;text-align:center;top:501.7199999999999px;font-size:9.8px;font-weight:bold;transform:scaleX(0.87);color:#111">85,0</div><svg class="a" style="left:14px;top:513px" width="11" height="10" viewBox="0 0 11 10"><rect x="0" y="0" width="1" height="9" fill="#B8B8B8"/><rect x="10" y="0" width="1" height="9" fill="#A0A0A0"/><rect x="2" y="2" width="1.6" height="7" fill="#E81010"/><rect x="4" y="0" width="1.6" height="9" fill="#1818C8"/><rect x="6" y="3" width="1.6" height="6" fill="#F018F0"/><rect x="8" y="1" width="1.6" height="8" fill="#108010"/><rect x="0" y="9" width="11" height="1" fill="#202020"/></svg><div class="t" style="left:25.5px;top:512.9999999999999px;font-size:9.8px;font-weight:bold;transform:scaleX(0.87);transform-origin:0 0;color:#111">F</div><div class="t" style="left:78.3px;width:63.39999999999999px;text-align:center;top:512.9999999999999px;font-size:9.8px;font-weight:bold;transform:scaleX(0.87);color:#111">30 ~ 90 dB</div><div class="t" style="left:141.7px;width:63.80000000000001px;text-align:center;top:512.9999999999999px;font-size:9.8px;font-weight:bold;transform:scaleX(0.87);color:#111">FLAT</div><div class="t" style="left:205.5px;width:40.0px;text-align:center;top:512.9999999999999px;font-size:9.8px;font-weight:bold;transform:scaleX(0.87);color:#111">85,0</div><div class="t" style="left:245.5px;width:39.84500000000003px;text-align:center;top:512.9999999999999px;font-size:9.8px;font-weight:bold;transform:scaleX(0.87);color:#111">85,0</div><div class="t" style="left:285.345px;width:39.84499999999997px;text-align:center;top:512.9999999999999px;font-size:9.8px;font-weight:bold;transform:scaleX(0.87);color:#111">85,0</div><div class="t" style="left:325.19px;width:39.84499999999997px;text-align:center;top:512.9999999999999px;font-size:9.8px;font-weight:bold;transform:scaleX(0.87);color:#111">85,0</div><div class="t" style="left:365.03499999999997px;width:39.84500000000003px;text-align:center;top:512.9999999999999px;font-size:9.8px;font-weight:bold;transform:scaleX(0.87);color:#111">85,0</div><div class="t" style="left:404.88px;width:39.84500000000003px;text-align:center;top:512.9999999999999px;font-size:9.8px;font-weight:bold;transform:scaleX(0.87);color:#111">85,0</div><div class="t" style="left:444.725px;width:39.84499999999997px;text-align:center;top:512.9999999999999px;font-size:9.8px;font-weight:bold;transform:scaleX(0.87);color:#111">85,0</div><div class="t" style="left:484.57px;width:39.84499999999997px;text-align:center;top:512.9999999999999px;font-size:9.8px;font-weight:bold;transform:scaleX(0.87);color:#111">85,0</div><div class="t" style="left:524.415px;width:39.84500000000003px;text-align:center;top:512.9999999999999px;font-size:9.8px;font-weight:bold;transform:scaleX(0.87);color:#111">85,0</div><div class="t" style="left:564.26px;width:39.84500000000003px;text-align:center;top:512.9999999999999px;font-size:9.8px;font-weight:bold;transform:scaleX(0.87);color:#111">85,0</div><div class="t" style="left:604.105px;width:39.84500000000003px;text-align:center;top:512.9999999999999px;font-size:9.8px;font-weight:bold;transform:scaleX(0.87);color:#111">85,0</div><div class="t" style="left:643.95px;width:39.844999999999914px;text-align:center;top:512.9999999999999px;font-size:9.8px;font-weight:bold;transform:scaleX(0.87);color:#111">85,0</div><div class="t" style="left:683.795px;width:39.84500000000003px;text-align:center;top:512.9999999999999px;font-size:9.8px;font-weight:bold;transform:scaleX(0.87);color:#111">85,0</div><div class="t" style="left:723.64px;width:39.84500000000003px;text-align:center;top:512.9999999999999px;font-size:9.8px;font-weight:bold;transform:scaleX(0.87);color:#111">85,0</div><div class="t" style="left:763.485px;width:39.844999999999914px;text-align:center;top:512.9999999999999px;font-size:9.8px;font-weight:bold;transform:scaleX(0.87);color:#111">85,0</div><div class="t" style="left:803.3299999999999px;width:39.84500000000003px;text-align:center;top:512.9999999999999px;font-size:9.8px;font-weight:bold;transform:scaleX(0.87);color:#111">85,0</div><div class="t" style="left:843.175px;width:39.84500000000003px;text-align:center;top:512.9999999999999px;font-size:9.8px;font-weight:bold;transform:scaleX(0.87);color:#111">85,0</div><div class="t" style="left:883.02px;width:39.84500000000003px;text-align:center;top:512.9999999999999px;font-size:9.8px;font-weight:bold;transform:scaleX(0.87);color:#111">85,0</div><div class="t" style="left:922.865px;width:39.84500000000003px;text-align:center;top:512.9999999999999px;font-size:9.8px;font-weight:bold;transform:scaleX(0.87);color:#111">85,0</div><div class="t" style="left:962.71px;width:39.844999999999914px;text-align:center;top:512.9999999999999px;font-size:9.8px;font-weight:bold;transform:scaleX(0.87);color:#111">85,0</div><div class="t" style="left:1002.555px;width:39.84500000000014px;text-align:center;top:512.9999999999999px;font-size:9.8px;font-weight:bold;transform:scaleX(0.87);color:#111">85,0</div><div class="t" style="left:1042.4px;width:39.8449999999998px;text-align:center;top:512.9999999999999px;font-size:9.8px;font-weight:bold;transform:scaleX(0.87);color:#111">85,0</div><div class="t" style="left:1082.245px;width:39.84500000000003px;text-align:center;top:512.9999999999999px;font-size:9.8px;font-weight:bold;transform:scaleX(0.87);color:#111">85,0</div><div class="t" style="left:1122.09px;width:39.84500000000003px;text-align:center;top:512.9999999999999px;font-size:9.8px;font-weight:bold;transform:scaleX(0.87);color:#111">85,0</div><div class="t" style="left:1161.935px;width:39.84500000000003px;text-align:center;top:512.9999999999999px;font-size:9.8px;font-weight:bold;transform:scaleX(0.87);color:#111">85,0</div><div class="t" style="left:1201.78px;width:39.84500000000003px;text-align:center;top:512.9999999999999px;font-size:9.8px;font-weight:bold;transform:scaleX(0.87);color:#111">85,0</div><div class="t" style="left:1241.625px;width:39.84500000000003px;text-align:center;top:512.9999999999999px;font-size:9.8px;font-weight:bold;transform:scaleX(0.87);color:#111">85,0</div><div class="t" style="left:1281.47px;width:39.84500000000003px;text-align:center;top:512.9999999999999px;font-size:9.8px;font-weight:bold;transform:scaleX(0.87);color:#111">85,0</div><div class="t" style="left:1321.315px;width:39.8449999999998px;text-align:center;top:512.9999999999999px;font-size:9.8px;font-weight:bold;transform:scaleX(0.87);color:#111">85,0</div><div class="t" style="left:1361.1599999999999px;width:39.84500000000003px;text-align:center;top:512.9999999999999px;font-size:9.8px;font-weight:bold;transform:scaleX(0.87);color:#111">85,0</div><div class="t" style="left:1401.0049999999999px;width:39.84500000000003px;text-align:center;top:512.9999999999999px;font-size:9.8px;font-weight:bold;transform:scaleX(0.87);color:#111">85,0</div><div class="t" style="left:1440.85px;width:39.84500000000003px;text-align:center;top:512.9999999999999px;font-size:9.8px;font-weight:bold;transform:scaleX(0.87);color:#111">85,0</div><div class="a" style="left:1496.5px;top:313px;width:3.5px;height:222px;background:#ECE9D8"></div></body></html>
